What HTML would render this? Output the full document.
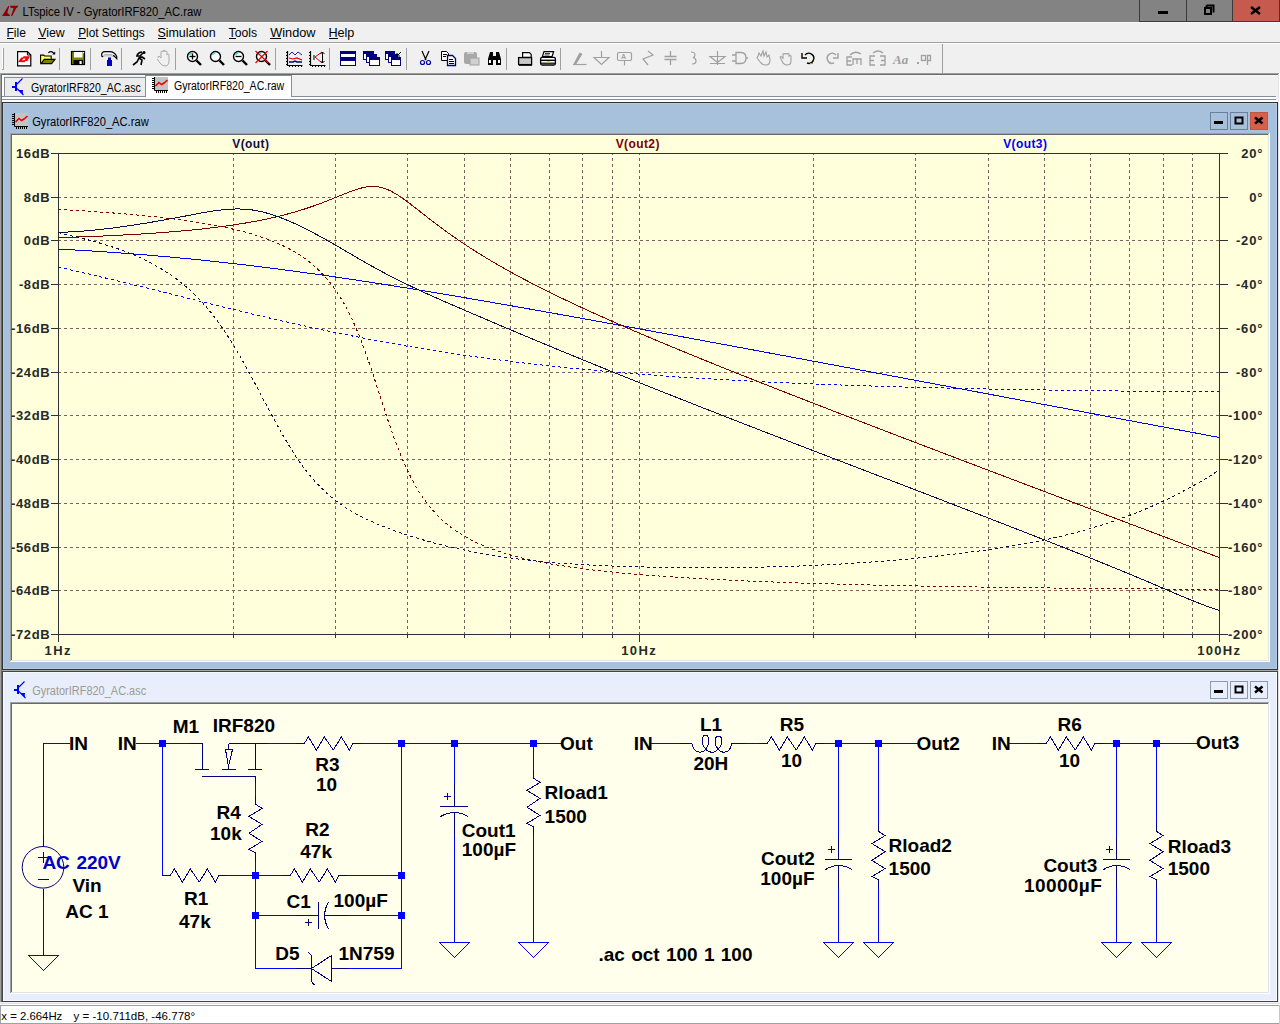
<!DOCTYPE html>
<html><head><meta charset="utf-8"><style>
html,body{margin:0;padding:0;width:1280px;height:1024px;overflow:hidden;background:#f0f0f0}
svg{display:block;font-family:"Liberation Sans",sans-serif}
</style></head><body>
<svg width="1280" height="1024" viewBox="0 0 1280 1024"><rect x="0" y="0" width="1280" height="1024" fill="#f0f0f0"/><rect x="0" y="0" width="1280" height="22" fill="#838383"/><path d="M8.4 5.8 L9.2 6.6 L7.2 12.8 L9.9 15 L9.9 16.1 L2 16.1 L3.2 14.3 Z M10.2 5.8 L18.3 5.8 L17.6 7.2 L16.2 8.2 L12.2 16.1 L11 16.1 L13.6 8.3 L10.3 7.4 Z" fill="#8e0000"/><text x="22.599999999999998" y="16" font-size="12" fill="#000" font-weight="normal" textLength="178.8" lengthAdjust="spacingAndGlyphs">LTspice IV - GyratorIRF820_AC.raw</text><rect x="1139" y="0" width="141" height="22" fill="#838383"/><rect x="1233" y="0" width="47" height="21" fill="#c75a4e"/><rect x="1139" y="0" width="1" height="22" fill="#3a3a3a"/><rect x="1186" y="0" width="1" height="22" fill="#3a3a3a"/><rect x="1232" y="0" width="1" height="22" fill="#3a3a3a"/><rect x="1279" y="0" width="1" height="22" fill="#3a3a3a"/><rect x="1139" y="21" width="141" height="1" fill="#3a3a3a"/><rect x="1158" y="11" width="10" height="3" fill="#000"/><path d="M1206.5 5.5 h7 v7 M1206.5 7.5 v-2" stroke="#000" stroke-width="2" fill="none"/><rect x="1205" y="8" width="6" height="6" fill="none" stroke="#000" stroke-width="2"/><path d="M1251 7 L1260 14 M1260 7 L1251 14" stroke="#000" stroke-width="2.4"/><rect x="0" y="22" width="1280" height="1" fill="#f8f8f8"/><text x="6.4" y="37" font-size="12" fill="#000" font-weight="normal" textLength="19.5" lengthAdjust="spacingAndGlyphs">File</text><text x="38.199999999999996" y="37" font-size="12" fill="#000" font-weight="normal" textLength="26.499999999999996" lengthAdjust="spacingAndGlyphs">View</text><text x="78.15" y="37" font-size="12" fill="#000" font-weight="normal" textLength="66.55" lengthAdjust="spacingAndGlyphs">Plot Settings</text><text x="157.4" y="37" font-size="12" fill="#000" font-weight="normal" textLength="58.2" lengthAdjust="spacingAndGlyphs">Simulation</text><text x="228.6" y="37" font-size="12" fill="#000" font-weight="normal" textLength="28.50000000000001" lengthAdjust="spacingAndGlyphs">Tools</text><text x="270.2" y="37" font-size="12" fill="#000" font-weight="normal" textLength="45.39999999999999" lengthAdjust="spacingAndGlyphs">Window</text><text x="328.4" y="37" font-size="12" fill="#000" font-weight="normal" textLength="26.00000000000001" lengthAdjust="spacingAndGlyphs">Help</text><rect x="7" y="38" width="7" height="1" fill="#000"/><rect x="38" y="38" width="8" height="1" fill="#000"/><rect x="78" y="38" width="8" height="1" fill="#000"/><rect x="158" y="38" width="8" height="1" fill="#000"/><rect x="229" y="38" width="7" height="1" fill="#000"/><rect x="270" y="38" width="11" height="1" fill="#000"/><rect x="329" y="38" width="9" height="1" fill="#000"/><rect x="0" y="42" width="1280" height="1" fill="#a0a0a0"/><rect x="0" y="43" width="1280" height="1" fill="#ffffff"/><rect x="0" y="44" width="1280" height="29" fill="#f0f0f0"/><rect x="0" y="73" width="1280" height="1" fill="#a0a0a0"/><rect x="0" y="74" width="1280" height="1" fill="#ffffff"/><rect x="2" y="48" width="1" height="22" fill="#ffffff"/><rect x="3" y="48" width="1" height="22" fill="#a0a0a0"/><rect x="2" y="69" width="2" height="1" fill="#a0a0a0"/><rect x="942" y="44" width="1" height="29" fill="#a0a0a0"/><rect x="59" y="48" width="1" height="22" fill="#a0a0a0"/><rect x="90" y="48" width="1" height="22" fill="#a0a0a0"/><rect x="121" y="48" width="1" height="22" fill="#a0a0a0"/><rect x="175" y="48" width="1" height="22" fill="#a0a0a0"/><rect x="275" y="48" width="1" height="22" fill="#a0a0a0"/><rect x="329" y="48" width="1" height="22" fill="#a0a0a0"/><rect x="406" y="48" width="1" height="22" fill="#a0a0a0"/><rect x="506" y="48" width="1" height="22" fill="#a0a0a0"/><rect x="560" y="48" width="1" height="22" fill="#a0a0a0"/><path d="M17.6 51.6 h9.8 l3.4 3.4 v10.8 h-13.2 z" fill="#fff" stroke="#000" stroke-width="1.2"/><path d="M27.4 51.6 v3.4 h3.4" fill="none" stroke="#000"/><path d="M18 62 L21.2 57.4 L22.8 57.4 L23.6 56.2 L30.2 56.2 L27.2 61 L25.4 61 L24.6 62.2 Z" fill="#ff0000"/><path d="M22 60.2 l1.3-1.7 h2.4 l-1.3 1.7 z" fill="#fff"/><path d="M40.6 63.6 V55.1 h3.2 l0.8 0.9 h6.6 v3.6" fill="#ffff70" stroke="#000" stroke-width="1.1"/><path d="M41 63.6 L44.2 59.4 H55 L51.6 63.6 Z" fill="#808000" stroke="#000" stroke-width="1.1"/><path d="M48.3 52.8 q3-2.6 5.6 0.6" stroke="#000" fill="none" stroke-width="1.1"/><path d="M52.2 54.6 h3 v-3 z" fill="#000"/><rect x="71.5" y="51.5" width="13" height="13" fill="#808000" stroke="#000" stroke-width="1.2"/><rect x="74" y="52" width="8.5" height="5.5" fill="#fff"/><rect x="73.5" y="60" width="9.5" height="5" fill="#000"/><rect x="79.5" y="61" width="2.2" height="3" fill="#fff"/><rect x="83" y="52" width="1.2" height="1.2" fill="#fff"/><path d="M101.6 54.6 q0.2-3 3.2-3 h4.8 q5.2 0 7.2 5.2 v2 l-1-1.2 q-1.6-2.2 -4.2-2.2 h-6.8 q-1.6 0 -2.4 1.4 q-0.8 0 -0.8 -2.2 z" fill="#f0f0f0" stroke="#000" stroke-width="1.1"/><rect x="103" y="55" width="10" height="1.5" fill="#c8c8c8"/><rect x="108" y="57.5" width="3" height="3" fill="#0000c0"/><rect x="107" y="60" width="5" height="6" fill="#0000c8"/><path d="M133 65 l4-3 l2-4 l3 2 l-1 5 M136 56 l4 0 l3 -3 M139 58 l3 -1 l3 2 M137 55 q2-3 5-3" stroke="#000" stroke-width="1.6" fill="none"/><circle cx="144" cy="52.5" r="1.5" fill="#000"/><path d="M157 59 l3 4 q2 3 5 3 q4 0 4-5 v-6 q0-1 -1-1 q-1 0 -1 1 v-3 q0-1 -1-1 q-1 0 -1 1 q0-2 -1-2 q-1 0 -1 2 q0-1 -1-1 q-1 0 -1 1 v6 l-2-2 q-1 0 -1 2" fill="#f0f0f0" stroke="#a8a8a8"/><circle cx="192.5" cy="56.5" r="5" fill="#fff" stroke="#000" stroke-width="1.4"/><path d="M189.5 55 a3 3 0 0 1 3-2" stroke="#40e0e0" stroke-width="1.5" fill="none"/><path d="M196.5 60.5 l4.5 4.5" stroke="#000" stroke-width="2.4"/><path d="M189.5 56.5 h6" stroke="#000" stroke-width="1.3"/><path d="M192.5 53.5 v6" stroke="#000" stroke-width="1.3"/><circle cx="215.5" cy="56.5" r="5" fill="#fff" stroke="#000" stroke-width="1.4"/><path d="M212.5 55 a3 3 0 0 1 3-2" stroke="#40e0e0" stroke-width="1.5" fill="none"/><path d="M219.5 60.5 l4.5 4.5" stroke="#000" stroke-width="2.4"/><circle cx="238.5" cy="56.5" r="5" fill="#fff" stroke="#000" stroke-width="1.4"/><path d="M235.5 55 a3 3 0 0 1 3-2" stroke="#40e0e0" stroke-width="1.5" fill="none"/><path d="M242.5 60.5 l4.5 4.5" stroke="#000" stroke-width="2.4"/><path d="M235.5 56.5 h6" stroke="#000" stroke-width="1.3"/><circle cx="261.5" cy="56.5" r="5" fill="#fff" stroke="#000" stroke-width="1.4"/><path d="M258.5 55 a3 3 0 0 1 3-2" stroke="#40e0e0" stroke-width="1.5" fill="none"/><path d="M265.5 60.5 l4.5 4.5" stroke="#000" stroke-width="2.4"/><path d="M255.5 51 L268.5 63 M267.5 51 L255.5 63" stroke="#f00000" stroke-width="1.2"/><path d="M287.5 51 v14.5 h15" stroke="#000" stroke-width="1.2" fill="none"/><rect x="286" y="52" width="1.5" height="1" fill="#000"/><rect x="289" y="65.5" width="1" height="1.5" fill="#000"/><rect x="286" y="55" width="1.5" height="1" fill="#000"/><rect x="292" y="65.5" width="1" height="1.5" fill="#000"/><rect x="286" y="58" width="1.5" height="1" fill="#000"/><rect x="295" y="65.5" width="1" height="1.5" fill="#000"/><rect x="286" y="61" width="1.5" height="1" fill="#000"/><rect x="298" y="65.5" width="1" height="1.5" fill="#000"/><rect x="286" y="64" width="1.5" height="1" fill="#000"/><rect x="301" y="65.5" width="1" height="1.5" fill="#000"/><path d="M289 55 l3-3 l3 3 l3-3 l4 3" stroke="#2020a0" fill="none"/><path d="M289 58 l4 1 l4-1 l5 2" stroke="#e00000" fill="none" stroke-width="1.2"/><path d="M289 62 h4 l2-1 l2 1 h5" stroke="#000080" fill="none" stroke-width="1.4"/><path d="M310.5 51 v14.5 h15" stroke="#000" stroke-width="1.2" fill="none"/><rect x="309" y="52" width="1.5" height="1" fill="#000"/><rect x="312" y="65.5" width="1" height="1.5" fill="#000"/><rect x="309" y="55" width="1.5" height="1" fill="#000"/><rect x="315" y="65.5" width="1" height="1.5" fill="#000"/><rect x="309" y="58" width="1.5" height="1" fill="#000"/><rect x="318" y="65.5" width="1" height="1.5" fill="#000"/><rect x="309" y="61" width="1.5" height="1" fill="#000"/><rect x="321" y="65.5" width="1" height="1.5" fill="#000"/><rect x="309" y="64" width="1.5" height="1" fill="#000"/><rect x="324" y="65.5" width="1" height="1.5" fill="#000"/><path d="M322 52 l-7 5 l7 6" stroke="#e00000" fill="none"/><path d="M322.5 52 v11 M320.5 54 l2-2 l2 2 M320.5 61 l2 2 l2-2 M314 55 v5" stroke="#000" fill="none"/><rect x="340.5" y="51.5" width="15" height="6" fill="#fff" stroke="#000080"/><rect x="341" y="52" width="14" height="2" fill="#000080"/><rect x="340.5" y="58.5" width="15" height="7" fill="#fff" stroke="#000080"/><rect x="341" y="59" width="14" height="2" fill="#000080"/><rect x="363.5" y="51.5" width="10" height="8" fill="#fff" stroke="#000080"/><rect x="364" y="52" width="9" height="2" fill="#000080"/><rect x="366.5" y="54.5" width="10" height="8" fill="#fff" stroke="#000080"/><rect x="367" y="55" width="9" height="2" fill="#000080"/><rect x="369.5" y="57.5" width="10" height="8" fill="#fff" stroke="#000080"/><rect x="370" y="58" width="9" height="2" fill="#000080"/><rect x="385.5" y="51.5" width="9" height="8" fill="#fff" stroke="#000080"/><rect x="386" y="52" width="8" height="2" fill="#000080"/><rect x="388.5" y="54.5" width="9" height="8" fill="#fff" stroke="#000080"/><rect x="389" y="55" width="8" height="2" fill="#000080"/><rect x="391.5" y="57.5" width="9" height="8" fill="#fff" stroke="#000080"/><rect x="392" y="58" width="8" height="2" fill="#000080"/><path d="M397 56 l4-4 M397 53 v3 h3" stroke="#000" fill="none"/><path d="M422 51 l4 9 M429 51 l-4 9" stroke="#000" stroke-width="1.2"/><circle cx="422.5" cy="62.5" r="2" fill="none" stroke="#0000a0" stroke-width="1.2"/><circle cx="428.5" cy="62.5" r="2" fill="none" stroke="#0000a0" stroke-width="1.2"/><path d="M441.5 51.5 h5 l2 2 v7 h-7 z" fill="#fff" stroke="#000"/><path d="M447.5 55.5 h5 l3 3 v7 h-8 z" fill="#fff" stroke="#000080" stroke-width="1.3"/><rect x="443" y="54" width="4" height="1" fill="#000"/><rect x="443" y="56" width="3" height="1" fill="#000"/><rect x="449" y="59" width="4" height="1" fill="#000"/><rect x="449" y="61" width="5" height="1" fill="#000"/><rect x="449" y="63" width="5" height="1" fill="#000"/><rect x="464" y="52" width="13" height="12" rx="2" fill="#a8a8a8"/><rect x="470" y="58" width="9" height="7" fill="#d0d0d0" stroke="#a0a0a0"/><rect x="467" y="52" width="7" height="2" fill="#d0d0d0"/><path d="M488 65 v-6 l2-7 h3 v13 z M496 65 v-13 h3 l2 7 v6 z M492 56 h5 v4 h-5 z" fill="#000"/><rect x="489" y="60" width="2" height="3" fill="#fff"/><rect x="498" y="60" width="2" height="3" fill="#fff"/><path d="M522.6 52.6 h6.8 l1.8 1.8 v3 h-8.6 z" fill="#fff" stroke="#000" stroke-width="1.2"/><rect x="518.6" y="57.6" width="13" height="7" fill="#c8c8c8" stroke="#000" stroke-width="1.3"/><rect x="519" y="64" width="13" height="1.8" fill="#000"/><path d="M544 51.6 h9.6 l-1.6 5 h-9.6 z" fill="#fff" stroke="#000" stroke-width="1.2"/><path d="M545 53.5 h5 M544.5 55 h5" stroke="#000" stroke-width="0.8"/><rect x="540.6" y="57.4" width="14.8" height="7.6" rx="1.5" fill="#fff" stroke="#000" stroke-width="1.3"/><rect x="541" y="59.6" width="14" height="1.4" fill="#000"/><rect x="541" y="62.6" width="14" height="1.2" fill="#000"/><rect x="547" y="61" width="3" height="1.4" fill="#e8e000"/><path d="M573 64.5 h13.5" stroke="#a0a0a0" stroke-width="1.2"/><path d="M573.5 64 L579.5 52.5 L582.5 54 L576 64.5 Z" fill="#a0a0a0"/><path d="M601.5 51 v6 M594 57.5 h15 l-7.5 7 z" stroke="#a0a0a0" fill="none" stroke-width="1.2"/><rect x="617.5" y="52.5" width="14" height="8" rx="1.5" fill="none" stroke="#a0a0a0" stroke-width="1.2"/><path d="M624.5 60.5 v5" stroke="#a0a0a0" stroke-width="1.2"/><text x="621" y="59" font-size="7" font-weight="bold" fill="#a0a0a0">A</text><path d="M648 51 l5 4 l-10 4 l5 6" stroke="#a0a0a0" fill="none" stroke-width="1.2"/><path d="M670.5 51 v5 M670.5 60 v5 M664.5 56.5 h12 M664.5 59.5 h12" stroke="#a0a0a0" stroke-width="1.3"/><path d="M691 52 q4 0 4 3 q0 2 -2 2.5 q3 0.5 3 3.5 q0 3 -4 3" stroke="#a0a0a0" fill="none" stroke-width="1.2"/><path d="M717.5 51 v14 M710 56.5 h15 l-7.5 6 z M710 63.5 h15" stroke="#a0a0a0" fill="none" stroke-width="1.2"/><path d="M732 55 h4 M732 61 h4 M736 52.5 h5 q5 0 5 5.5 q0 5.5 -5 5.5 h-5 z M746 58 h2" stroke="#a0a0a0" fill="none" stroke-width="1.3"/><path d="M757 58 l4 5 q2 2 5 2 q4 0 4-5 l-1-5 l-2 2 l-1-5 l-2 4 l-1-5 l-2 5 l-2-3 l-1 3 z" fill="none" stroke="#a0a0a0" stroke-width="1.1"/><path d="M780 57 l3 6 q2 2 4 2 q4 0 4-4 v-5 q-1-1 -2 0 v-2 q-1-1 -2 0 q-1-1 -2 0 q-1-1 -2 0 v4 q-2-2 -3-1" fill="none" stroke="#a0a0a0" stroke-width="1.1"/><path d="M805 55 a5 5 0 1 1 2 8" stroke="#000" fill="none" stroke-width="1.4"/><path d="M802 53 v5 h5" stroke="#000" fill="none" stroke-width="1.4"/><path d="M810 63.5 h3" stroke="#c0a000" stroke-width="1.2"/><path d="M836 55 a5 5 0 1 0 -2 8" stroke="#a0a0a0" fill="none" stroke-width="1.4"/><path d="M838 53 v5 h-5" stroke="#a0a0a0" fill="none" stroke-width="1.4"/><path d="M852 65 h-5 v-8 h5 M847 61 h4 M853 65 v-6 h8 v6 M857 59 v5 M850 55 q5-5 11 -1" stroke="#a0a0a0" fill="none" stroke-width="1.3"/><path d="M875 56 h-5 v9 h5 M870 60.5 h4 M880 56 h5 v9 h-5 M881 60.5 h4 M873 53 q5-4 10 0" stroke="#a0a0a0" fill="none" stroke-width="1.3"/><text x="893" y="64" font-size="13" font-style="italic" font-weight="bold" fill="#a0a0a0" font-family="Liberation Serif">Aa</text><rect x="917" y="62" width="2" height="2" fill="#a0a0a0"/><rect x="921.5" y="55.5" width="4" height="5" fill="none" stroke="#a0a0a0" stroke-width="1.3"/><path d="M927.5 65 v-9.5 h3 v5 h-3" stroke="#a0a0a0" fill="none" stroke-width="1.3"/><rect x="0" y="73" width="1280" height="1" fill="#a0a0a0"/><rect x="1" y="74" width="1278" height="1" fill="#696969"/><rect x="0" y="73" width="1" height="932" fill="#a0a0a0"/><rect x="1" y="74" width="1" height="930" fill="#696969"/><rect x="1278" y="74" width="1" height="930" fill="#e3e3e3"/><rect x="1279" y="73" width="1" height="932" fill="#ffffff"/><rect x="2" y="75" width="1276" height="27" fill="#f0f0f0"/><rect x="2" y="75" width="1276" height="1" fill="#f8f8f8"/><rect x="2" y="75" width="1" height="27" fill="#ffffff"/><rect x="3" y="75" width="1" height="27" fill="#ffffff"/><rect x="4" y="77" width="142" height="20" fill="#ececec"/><rect x="4" y="77" width="142" height="1" fill="#888c98"/><rect x="4" y="77" width="1" height="20" fill="#888c98"/><rect x="2" y="96" width="1274" height="1" fill="#888c98"/><rect x="2" y="97" width="1274" height="2" fill="#ffffff"/><rect x="2" y="99" width="1274" height="1" fill="#888c98"/><rect x="2" y="100" width="1276" height="2" fill="#ffffff"/><rect x="146" y="75" width="146" height="24" fill="#ffffff"/><rect x="145" y="75" width="147" height="1" fill="#888c98"/><rect x="145" y="75" width="1" height="22" fill="#888c98"/><rect x="291" y="75" width="1" height="22" fill="#888c98"/><g transform="translate(12,79)" shape-rendering="crispEdges"><rect x="0" y="7" width="3" height="2" fill="#0000ff"/><rect x="3" y="3" width="2" height="9" fill="#0000ff"/><path d="M5 5 L10.5 -0.5 M5 9.5 L11.5 16" stroke="#0000ff" stroke-width="1.1" shape-rendering="geometricPrecision"/><path d="M6.5 11 L10 14.5 L10.5 11.5 Z" fill="#0000ff" stroke="#0000ff" stroke-width="0.8"/></g><text x="31.0" y="92" font-size="12" fill="#000" font-weight="normal" textLength="109.7" lengthAdjust="spacingAndGlyphs">GyratorIRF820_AC.asc</text><g transform="translate(152,77)"><rect x="3" y="0" width="13" height="13" fill="#c4c4c4"/><path d="M2.5 0 v13.5 h13.5" stroke="#000" fill="none"/><rect x="0" y="1" width="2" height="1" fill="#000"/><rect x="0" y="3" width="2" height="1" fill="#000"/><rect x="0" y="5" width="2" height="1" fill="#000"/><rect x="0" y="7" width="2" height="1" fill="#000"/><rect x="0" y="9" width="2" height="1" fill="#000"/><rect x="0" y="11" width="2" height="1" fill="#000"/><rect x="4" y="14" width="1" height="2" fill="#000"/><rect x="6" y="14" width="1" height="2" fill="#000"/><rect x="8" y="14" width="1" height="2" fill="#000"/><rect x="10" y="14" width="1" height="2" fill="#000"/><rect x="12" y="14" width="1" height="2" fill="#000"/><rect x="14" y="14" width="1" height="2" fill="#000"/><path d="M3.5 9 l3.5-3.5 l2.5 2 l2.5-1.5 l3.5-3" stroke="#f00000" stroke-width="1.6" fill="none"/></g><text x="174.0" y="90" font-size="12" fill="#000" font-weight="normal" textLength="110.20000000000003" lengthAdjust="spacingAndGlyphs">GyratorIRF820_AC.raw</text><rect x="2" y="102" width="1276" height="568" fill="#a7c1dd"/><rect x="2" y="102" width="1276" height="1" fill="#333333"/><rect x="2" y="102" width="1" height="568" fill="#333333"/><rect x="1277" y="102" width="1" height="568" fill="#333333"/><rect x="2" y="669" width="1276" height="1" fill="#333333"/><rect x="3" y="103" width="1274" height="1" fill="#b0cce8"/><rect x="3" y="103" width="1" height="566" fill="#b0cce8"/><rect x="3" y="668" width="1274" height="1" fill="#b0cce8"/><rect x="1276" y="103" width="1" height="566" fill="#b0cce8"/><g transform="translate(12,113)"><rect x="3" y="0" width="13" height="13" fill="#c4c4c4"/><path d="M2.5 0 v13.5 h13.5" stroke="#000" fill="none"/><rect x="0" y="1" width="2" height="1" fill="#000"/><rect x="0" y="3" width="2" height="1" fill="#000"/><rect x="0" y="5" width="2" height="1" fill="#000"/><rect x="0" y="7" width="2" height="1" fill="#000"/><rect x="0" y="9" width="2" height="1" fill="#000"/><rect x="0" y="11" width="2" height="1" fill="#000"/><rect x="4" y="14" width="1" height="2" fill="#000"/><rect x="6" y="14" width="1" height="2" fill="#000"/><rect x="8" y="14" width="1" height="2" fill="#000"/><rect x="10" y="14" width="1" height="2" fill="#000"/><rect x="12" y="14" width="1" height="2" fill="#000"/><rect x="14" y="14" width="1" height="2" fill="#000"/><path d="M3.5 9 l3.5-3.5 l2.5 2 l2.5-1.5 l3.5-3" stroke="#f00000" stroke-width="1.6" fill="none"/></g><text x="32.15" y="126" font-size="12" fill="#000" font-weight="normal" textLength="116.55" lengthAdjust="spacingAndGlyphs">GyratorIRF820_AC.raw</text><rect x="1210.5" y="112.5" width="17" height="17" fill="#a7c1dd" stroke="#6a7f9a"/><rect x="1214" y="121" width="9" height="3" fill="#000"/><rect x="1230.5" y="112.5" width="17" height="17" fill="#a7c1dd" stroke="#6a7f9a"/><rect x="1235.5" y="117.5" width="7" height="6" fill="none" stroke="#000" stroke-width="2"/><rect x="1250.5" y="112.5" width="17" height="17" fill="#d8604a" stroke="#c25540"/><path d="M1255 117.5 L1262.5 123.5 M1262.5 117.5 L1255 123.5" stroke="#000" stroke-width="2.6"/><rect x="10" y="133" width="1260" height="1" fill="#a0a0a0"/><rect x="10" y="133" width="1" height="529" fill="#a0a0a0"/><rect x="11" y="134" width="1258" height="1" fill="#696969"/><rect x="11" y="134" width="1" height="527" fill="#696969"/><rect x="11" y="660" width="1258" height="1" fill="#e3e3e3"/><rect x="1268" y="134" width="1" height="527" fill="#e3e3e3"/><rect x="10" y="661" width="1260" height="1" fill="#ffffff"/><rect x="1269" y="133" width="1" height="529" fill="#ffffff"/><rect x="12" y="135" width="1256" height="525" fill="#ffffdc"/><g shape-rendering="crispEdges"><line x1="233.5" y1="154" x2="233.5" y2="634" stroke="#7b5f5f" stroke-dasharray="3 3" stroke-dashoffset="2"/><line x1="335.5" y1="154" x2="335.5" y2="634" stroke="#7b5f5f" stroke-dasharray="3 3" stroke-dashoffset="2"/><line x1="407.5" y1="154" x2="407.5" y2="634" stroke="#7b5f5f" stroke-dasharray="3 3" stroke-dashoffset="2"/><line x1="464.5" y1="154" x2="464.5" y2="634" stroke="#7b5f5f" stroke-dasharray="3 3" stroke-dashoffset="2"/><line x1="510.5" y1="154" x2="510.5" y2="634" stroke="#7b5f5f" stroke-dasharray="3 3" stroke-dashoffset="2"/><line x1="549.5" y1="154" x2="549.5" y2="634" stroke="#7b5f5f" stroke-dasharray="3 3" stroke-dashoffset="2"/><line x1="582.5" y1="154" x2="582.5" y2="634" stroke="#7b5f5f" stroke-dasharray="3 3" stroke-dashoffset="2"/><line x1="612.5" y1="154" x2="612.5" y2="634" stroke="#7b5f5f" stroke-dasharray="3 3" stroke-dashoffset="2"/><line x1="813.5" y1="154" x2="813.5" y2="634" stroke="#7b5f5f" stroke-dasharray="3 3" stroke-dashoffset="2"/><line x1="915.5" y1="154" x2="915.5" y2="634" stroke="#7b5f5f" stroke-dasharray="3 3" stroke-dashoffset="2"/><line x1="988.5" y1="154" x2="988.5" y2="634" stroke="#7b5f5f" stroke-dasharray="3 3" stroke-dashoffset="2"/><line x1="1044.5" y1="154" x2="1044.5" y2="634" stroke="#7b5f5f" stroke-dasharray="3 3" stroke-dashoffset="2"/><line x1="1090.5" y1="154" x2="1090.5" y2="634" stroke="#7b5f5f" stroke-dasharray="3 3" stroke-dashoffset="2"/><line x1="1129.5" y1="154" x2="1129.5" y2="634" stroke="#7b5f5f" stroke-dasharray="3 3" stroke-dashoffset="2"/><line x1="1163.5" y1="154" x2="1163.5" y2="634" stroke="#7b5f5f" stroke-dasharray="3 3" stroke-dashoffset="2"/><line x1="1192.5" y1="154" x2="1192.5" y2="634" stroke="#7b5f5f" stroke-dasharray="3 3" stroke-dashoffset="2"/><line x1="639.5" y1="154" x2="639.5" y2="634" stroke="#7b5f5f" stroke-dasharray="3 3" stroke-dashoffset="2"/><line x1="58" y1="197.5" x2="1219" y2="197.5" stroke="#7b5f5f" stroke-dasharray="3 3"/><line x1="58" y1="240.5" x2="1219" y2="240.5" stroke="#7b5f5f" stroke-dasharray="3 3"/><line x1="58" y1="284.5" x2="1219" y2="284.5" stroke="#7b5f5f" stroke-dasharray="3 3"/><line x1="58" y1="328.5" x2="1219" y2="328.5" stroke="#7b5f5f" stroke-dasharray="3 3"/><line x1="58" y1="372.5" x2="1219" y2="372.5" stroke="#7b5f5f" stroke-dasharray="3 3"/><line x1="58" y1="415.5" x2="1219" y2="415.5" stroke="#7b5f5f" stroke-dasharray="3 3"/><line x1="58" y1="459.5" x2="1219" y2="459.5" stroke="#7b5f5f" stroke-dasharray="3 3"/><line x1="58" y1="503.5" x2="1219" y2="503.5" stroke="#7b5f5f" stroke-dasharray="3 3"/><line x1="58" y1="547.5" x2="1219" y2="547.5" stroke="#7b5f5f" stroke-dasharray="3 3"/><line x1="58" y1="590.5" x2="1219" y2="590.5" stroke="#7b5f5f" stroke-dasharray="3 3"/><rect x="51" y="153" width="1177" height="1" fill="#2e3232"/><rect x="51" y="634" width="1177" height="1" fill="#2e3232"/><rect x="58" y="153" width="1" height="489" fill="#2e3232"/><rect x="1219" y="153" width="1" height="489" fill="#2e3232"/><rect x="51" y="153" width="8" height="1" fill="#2e3232"/><rect x="1219" y="153" width="9" height="1" fill="#2e3232"/><rect x="51" y="197" width="8" height="1" fill="#2e3232"/><rect x="1219" y="197" width="9" height="1" fill="#2e3232"/><rect x="51" y="240" width="8" height="1" fill="#2e3232"/><rect x="1219" y="240" width="9" height="1" fill="#2e3232"/><rect x="51" y="284" width="8" height="1" fill="#2e3232"/><rect x="1219" y="284" width="9" height="1" fill="#2e3232"/><rect x="51" y="328" width="8" height="1" fill="#2e3232"/><rect x="1219" y="328" width="9" height="1" fill="#2e3232"/><rect x="51" y="372" width="8" height="1" fill="#2e3232"/><rect x="1219" y="372" width="9" height="1" fill="#2e3232"/><rect x="51" y="415" width="8" height="1" fill="#2e3232"/><rect x="1219" y="415" width="9" height="1" fill="#2e3232"/><rect x="51" y="459" width="8" height="1" fill="#2e3232"/><rect x="1219" y="459" width="9" height="1" fill="#2e3232"/><rect x="51" y="503" width="8" height="1" fill="#2e3232"/><rect x="1219" y="503" width="9" height="1" fill="#2e3232"/><rect x="51" y="547" width="8" height="1" fill="#2e3232"/><rect x="1219" y="547" width="9" height="1" fill="#2e3232"/><rect x="51" y="590" width="8" height="1" fill="#2e3232"/><rect x="1219" y="590" width="9" height="1" fill="#2e3232"/><rect x="51" y="634" width="8" height="1" fill="#2e3232"/><rect x="1219" y="634" width="9" height="1" fill="#2e3232"/><rect x="233" y="634" width="1" height="4" fill="#2e3232"/><rect x="335" y="634" width="1" height="4" fill="#2e3232"/><rect x="407" y="634" width="1" height="4" fill="#2e3232"/><rect x="464" y="634" width="1" height="4" fill="#2e3232"/><rect x="510" y="634" width="1" height="4" fill="#2e3232"/><rect x="549" y="634" width="1" height="4" fill="#2e3232"/><rect x="582" y="634" width="1" height="4" fill="#2e3232"/><rect x="612" y="634" width="1" height="4" fill="#2e3232"/><rect x="813" y="634" width="1" height="4" fill="#2e3232"/><rect x="915" y="634" width="1" height="4" fill="#2e3232"/><rect x="988" y="634" width="1" height="4" fill="#2e3232"/><rect x="1044" y="634" width="1" height="4" fill="#2e3232"/><rect x="1090" y="634" width="1" height="4" fill="#2e3232"/><rect x="1129" y="634" width="1" height="4" fill="#2e3232"/><rect x="1163" y="634" width="1" height="4" fill="#2e3232"/><rect x="1192" y="634" width="1" height="4" fill="#2e3232"/><rect x="639" y="634" width="1" height="8" fill="#2e3232"/></g><text x="50.2" y="158" font-size="13" fill="#262a2a" font-weight="bold" text-anchor="end" letter-spacing="0.6">16dB</text><text x="50.2" y="202" font-size="13" fill="#262a2a" font-weight="bold" text-anchor="end" letter-spacing="0.6">8dB</text><text x="50.2" y="245" font-size="13" fill="#262a2a" font-weight="bold" text-anchor="end" letter-spacing="0.6">0dB</text><text x="50.2" y="289" font-size="13" fill="#262a2a" font-weight="bold" text-anchor="end" letter-spacing="0.6">-8dB</text><text x="50.2" y="333" font-size="13" fill="#262a2a" font-weight="bold" text-anchor="end" letter-spacing="0.6">-16dB</text><text x="50.2" y="377" font-size="13" fill="#262a2a" font-weight="bold" text-anchor="end" letter-spacing="0.6">-24dB</text><text x="50.2" y="420" font-size="13" fill="#262a2a" font-weight="bold" text-anchor="end" letter-spacing="0.6">-32dB</text><text x="50.2" y="464" font-size="13" fill="#262a2a" font-weight="bold" text-anchor="end" letter-spacing="0.6">-40dB</text><text x="50.2" y="508" font-size="13" fill="#262a2a" font-weight="bold" text-anchor="end" letter-spacing="0.6">-48dB</text><text x="50.2" y="552" font-size="13" fill="#262a2a" font-weight="bold" text-anchor="end" letter-spacing="0.6">-56dB</text><text x="50.2" y="595" font-size="13" fill="#262a2a" font-weight="bold" text-anchor="end" letter-spacing="0.6">-64dB</text><text x="50.2" y="639" font-size="13" fill="#262a2a" font-weight="bold" text-anchor="end" letter-spacing="0.6">-72dB</text><text x="1263.2" y="158" font-size="13" fill="#262a2a" font-weight="bold" text-anchor="end" letter-spacing="0.8">20°</text><text x="1263.2" y="202" font-size="13" fill="#262a2a" font-weight="bold" text-anchor="end" letter-spacing="0.8">0°</text><text x="1263.2" y="245" font-size="13" fill="#262a2a" font-weight="bold" text-anchor="end" letter-spacing="0.8">-20°</text><text x="1263.2" y="289" font-size="13" fill="#262a2a" font-weight="bold" text-anchor="end" letter-spacing="0.8">-40°</text><text x="1263.2" y="333" font-size="13" fill="#262a2a" font-weight="bold" text-anchor="end" letter-spacing="0.8">-60°</text><text x="1263.2" y="377" font-size="13" fill="#262a2a" font-weight="bold" text-anchor="end" letter-spacing="0.8">-80°</text><text x="1263.2" y="420" font-size="13" fill="#262a2a" font-weight="bold" text-anchor="end" letter-spacing="0.8">-100°</text><text x="1263.2" y="464" font-size="13" fill="#262a2a" font-weight="bold" text-anchor="end" letter-spacing="0.8">-120°</text><text x="1263.2" y="508" font-size="13" fill="#262a2a" font-weight="bold" text-anchor="end" letter-spacing="0.8">-140°</text><text x="1263.2" y="552" font-size="13" fill="#262a2a" font-weight="bold" text-anchor="end" letter-spacing="0.8">-160°</text><text x="1263.2" y="595" font-size="13" fill="#262a2a" font-weight="bold" text-anchor="end" letter-spacing="0.8">-180°</text><text x="1263.2" y="639" font-size="13" fill="#262a2a" font-weight="bold" text-anchor="end" letter-spacing="0.8">-200°</text><text x="58.2" y="655" font-size="13" fill="#262a2a" font-weight="bold" text-anchor="middle" letter-spacing="1.4">1Hz</text><text x="639.2" y="655" font-size="13" fill="#262a2a" font-weight="bold" text-anchor="middle" letter-spacing="1.4">10Hz</text><text x="1219.2" y="655" font-size="13" fill="#262a2a" font-weight="bold" text-anchor="middle" letter-spacing="1.3">100Hz</text><text x="250.8" y="148" font-size="12" fill="#0e0e48" font-weight="bold" text-anchor="middle" letter-spacing="0.4">V(out)</text><text x="637.8" y="148" font-size="12" fill="#7a0000" font-weight="bold" text-anchor="middle" letter-spacing="0.4">V(out2)</text><text x="1025.3" y="148" font-size="12" fill="#0000f0" font-weight="bold" text-anchor="middle" letter-spacing="0.4">V(out3)</text><polyline points="58.50,267.13 60.16,267.50 61.82,267.87 63.48,268.24 65.14,268.62 66.80,268.99 68.47,269.37 70.13,269.75 71.79,270.13 73.45,270.51 75.11,270.89 76.77,271.27 78.43,271.65 80.09,272.03 81.75,272.42 83.41,272.80 85.08,273.19 86.74,273.58 88.40,273.96 90.06,274.35 91.72,274.74 93.38,275.13 95.04,275.52 96.70,275.91 98.36,276.31 100.02,276.70 101.68,277.10 103.35,277.49 105.01,277.89 106.67,278.28 108.33,278.68 109.99,279.08 111.65,279.48 113.31,279.88 114.97,280.28 116.63,280.68 118.29,281.08 119.95,281.48 121.62,281.88 123.28,282.29 124.94,282.69 126.60,283.09 128.26,283.50 129.92,283.90 131.58,284.31 133.24,284.72 134.90,285.12 136.56,285.53 138.23,285.94 139.89,286.34 141.55,286.75 143.21,287.16 144.87,287.57 146.53,287.98 148.19,288.39 149.85,288.80 151.51,289.21 153.17,289.62 154.83,290.03 156.50,290.44 158.16,290.85 159.82,291.27 161.48,291.68 163.14,292.09 164.80,292.50 166.46,292.91 168.12,293.33 169.78,293.74 171.44,294.15 173.11,294.56 174.77,294.98 176.43,295.39 178.09,295.80 179.75,296.21 181.41,296.63 183.07,297.04 184.73,297.45 186.39,297.86 188.05,298.28 189.71,298.69 191.38,299.10 193.04,299.51 194.70,299.92 196.36,300.34 198.02,300.75 199.68,301.16 201.34,301.57 203.00,301.98 204.66,302.39 206.32,302.80 207.98,303.21 209.65,303.62 211.31,304.03 212.97,304.44 214.63,304.85 216.29,305.25 217.95,305.66 219.61,306.07 221.27,306.48 222.93,306.88 224.59,307.29 226.26,307.69 227.92,308.10 229.58,308.50 231.24,308.91 232.90,309.31 234.56,309.71 236.22,310.11 237.88,310.51 239.54,310.92 241.20,311.32 242.86,311.71 244.53,312.11 246.19,312.51 247.85,312.91 249.51,313.31 251.17,313.70 252.83,314.10 254.49,314.49 256.15,314.88 257.81,315.28 259.47,315.67 261.14,316.06 262.80,316.45 264.46,316.84 266.12,317.23 267.78,317.62 269.44,318.00 271.10,318.39 272.76,318.78 274.42,319.16 276.08,319.54 277.74,319.93 279.41,320.31 281.07,320.69 282.73,321.07 284.39,321.45 286.05,321.82 287.71,322.20 289.37,322.58 291.03,322.95 292.69,323.32 294.35,323.70 296.02,324.07 297.68,324.44 299.34,324.81 301.00,325.17 302.66,325.54 304.32,325.91 305.98,326.27 307.64,326.64 309.30,327.00 310.96,327.36 312.62,327.72 314.29,328.08 315.95,328.44 317.61,328.79 319.27,329.15 320.93,329.50 322.59,329.86 324.25,330.21 325.91,330.56 327.57,330.91 329.23,331.26 330.89,331.60 332.56,331.95 334.22,332.29 335.88,332.64 337.54,332.98 339.20,333.32 340.86,333.66 342.52,334.00 344.18,334.33 345.84,334.67 347.50,335.00 349.17,335.34 350.83,335.67 352.49,336.00 354.15,336.33 355.81,336.66 357.47,336.98 359.13,337.31 360.79,337.63 362.45,337.96 364.11,338.28 365.77,338.60 367.44,338.91 369.10,339.23 370.76,339.55 372.42,339.86 374.08,340.18 375.74,340.49 377.40,340.80 379.06,341.11 380.72,341.42 382.38,341.72 384.05,342.03 385.71,342.33 387.37,342.63 389.03,342.93 390.69,343.23 392.35,343.53 394.01,343.83 395.67,344.12 397.33,344.42 398.99,344.71 400.65,345.00 402.32,345.29 403.98,345.58 405.64,345.87 407.30,346.16 408.96,346.44 410.62,346.72 412.28,347.01 413.94,347.29 415.60,347.57 417.26,347.84 418.92,348.12 420.59,348.40 422.25,348.67 423.91,348.94 425.57,349.21 427.23,349.48 428.89,349.75 430.55,350.02 432.21,350.29 433.87,350.55 435.53,350.81 437.20,351.07 438.86,351.34 440.52,351.59 442.18,351.85 443.84,352.11 445.50,352.36 447.16,352.62 448.82,352.87 450.48,353.12 452.14,353.37 453.80,353.62 455.47,353.87 457.13,354.11 458.79,354.36 460.45,354.60 462.11,354.84 463.77,355.09 465.43,355.32 467.09,355.56 468.75,355.80 470.41,356.04 472.08,356.27 473.74,356.50 475.40,356.74 477.06,356.97 478.72,357.20 480.38,357.42 482.04,357.65 483.70,357.88 485.36,358.10 487.02,358.32 488.68,358.55 490.35,358.77 492.01,358.99 493.67,359.20 495.33,359.42 496.99,359.64 498.65,359.85 500.31,360.06 501.97,360.28 503.63,360.49 505.29,360.70 506.95,360.91 508.62,361.11 510.28,361.32 511.94,361.52 513.60,361.73 515.26,361.93 516.92,362.13 518.58,362.33 520.24,362.53 521.90,362.73 523.56,362.93 525.23,363.12 526.89,363.32 528.55,363.51 530.21,363.70 531.87,363.90 533.53,364.09 535.19,364.28 536.85,364.46 538.51,364.65 540.17,364.84 541.83,365.02 543.50,365.20 545.16,365.39 546.82,365.57 548.48,365.75 550.14,365.93 551.80,366.11 553.46,366.28 555.12,366.46 556.78,366.63 558.44,366.81 560.11,366.98 561.77,367.15 563.43,367.33 565.09,367.50 566.75,367.66 568.41,367.83 570.07,368.00 571.73,368.16 573.39,368.33 575.05,368.49 576.71,368.66 578.38,368.82 580.04,368.98 581.70,369.14 583.36,369.30 585.02,369.46 586.68,369.61 588.34,369.77 590.00,369.93 591.66,370.08 593.32,370.23 594.98,370.39 596.65,370.54 598.31,370.69 599.97,370.84 601.63,370.99 603.29,371.13 604.95,371.28 606.61,371.43 608.27,371.57 609.93,371.72 611.59,371.86 613.26,372.00 614.92,372.14 616.58,372.28 618.24,372.42 619.90,372.56 621.56,372.70 623.22,372.84 624.88,372.97 626.54,373.11 628.20,373.24 629.86,373.38 631.53,373.51 633.19,373.64 634.85,373.77 636.51,373.90 638.17,374.03 639.83,374.16 641.49,374.29 643.15,374.42 644.81,374.55 646.47,374.67 648.14,374.80 649.80,374.92 651.46,375.04 653.12,375.17 654.78,375.29 656.44,375.41 658.10,375.53 659.76,375.65 661.42,375.77 663.08,375.89 664.74,376.00 666.41,376.12 668.07,376.24 669.73,376.35 671.39,376.46 673.05,376.58 674.71,376.69 676.37,376.80 678.03,376.92 679.69,377.03 681.35,377.14 683.02,377.25 684.68,377.35 686.34,377.46 688.00,377.57 689.66,377.68 691.32,377.78 692.98,377.89 694.64,377.99 696.30,378.10 697.96,378.20 699.62,378.30 701.29,378.40 702.95,378.51 704.61,378.61 706.27,378.71 707.93,378.81 709.59,378.90 711.25,379.00 712.91,379.10 714.57,379.20 716.23,379.29 717.89,379.39 719.56,379.48 721.22,379.58 722.88,379.67 724.54,379.77 726.20,379.86 727.86,379.95 729.52,380.04 731.18,380.13 732.84,380.22 734.50,380.31 736.17,380.40 737.83,380.49 739.49,380.58 741.15,380.67 742.81,380.75 744.47,380.84 746.13,380.93 747.79,381.01 749.45,381.10 751.11,381.18 752.77,381.26 754.44,381.35 756.10,381.43 757.76,381.51 759.42,381.59 761.08,381.67 762.74,381.75 764.40,381.83 766.06,381.91 767.72,381.99 769.38,382.07 771.05,382.15 772.71,382.23 774.37,382.30 776.03,382.38 777.69,382.45 779.35,382.53 781.01,382.60 782.67,382.68 784.33,382.75 785.99,382.83 787.65,382.90 789.32,382.97 790.98,383.04 792.64,383.12 794.30,383.19 795.96,383.26 797.62,383.33 799.28,383.40 800.94,383.47 802.60,383.54 804.26,383.60 805.92,383.67 807.59,383.74 809.25,383.81 810.91,383.87 812.57,383.94 814.23,384.01 815.89,384.07 817.55,384.14 819.21,384.20 820.87,384.26 822.53,384.33 824.20,384.39 825.86,384.45 827.52,384.52 829.18,384.58 830.84,384.64 832.50,384.70 834.16,384.76 835.82,384.82 837.48,384.88 839.14,384.94 840.80,385.00 842.47,385.06 844.13,385.12 845.79,385.18 847.45,385.23 849.11,385.29 850.77,385.35 852.43,385.41 854.09,385.46 855.75,385.52 857.41,385.57 859.08,385.63 860.74,385.68 862.40,385.74 864.06,385.79 865.72,385.85 867.38,385.90 869.04,385.95 870.70,386.00 872.36,386.06 874.02,386.11 875.68,386.16 877.35,386.21 879.01,386.26 880.67,386.31 882.33,386.36 883.99,386.41 885.65,386.46 887.31,386.51 888.97,386.56 890.63,386.61 892.29,386.66 893.95,386.71 895.62,386.76 897.28,386.80 898.94,386.85 900.60,386.90 902.26,386.94 903.92,386.99 905.58,387.04 907.24,387.08 908.90,387.13 910.56,387.17 912.23,387.22 913.89,387.26 915.55,387.31 917.21,387.35 918.87,387.39 920.53,387.44 922.19,387.48 923.85,387.52 925.51,387.56 927.17,387.61 928.83,387.65 930.50,387.69 932.16,387.73 933.82,387.77 935.48,387.81 937.14,387.85 938.80,387.89 940.46,387.93 942.12,387.97 943.78,388.01 945.44,388.05 947.11,388.09 948.77,388.13 950.43,388.17 952.09,388.21 953.75,388.25 955.41,388.28 957.07,388.32 958.73,388.36 960.39,388.39 962.05,388.43 963.71,388.47 965.38,388.50 967.04,388.54 968.70,388.58 970.36,388.61 972.02,388.65 973.68,388.68 975.34,388.72 977.00,388.75 978.66,388.79 980.32,388.82 981.98,388.85 983.65,388.89 985.31,388.92 986.97,388.95 988.63,388.99 990.29,389.02 991.95,389.05 993.61,389.09 995.27,389.12 996.93,389.15 998.59,389.18 1000.26,389.21 1001.92,389.24 1003.58,389.28 1005.24,389.31 1006.90,389.34 1008.56,389.37 1010.22,389.40 1011.88,389.43 1013.54,389.46 1015.20,389.49 1016.86,389.52 1018.53,389.55 1020.19,389.58 1021.85,389.61 1023.51,389.63 1025.17,389.66 1026.83,389.69 1028.49,389.72 1030.15,389.75 1031.81,389.78 1033.47,389.80 1035.14,389.83 1036.80,389.86 1038.46,389.89 1040.12,389.91 1041.78,389.94 1043.44,389.97 1045.10,389.99 1046.76,390.02 1048.42,390.05 1050.08,390.07 1051.74,390.10 1053.41,390.12 1055.07,390.15 1056.73,390.17 1058.39,390.20 1060.05,390.22 1061.71,390.25 1063.37,390.27 1065.03,390.30 1066.69,390.32 1068.35,390.35 1070.02,390.37 1071.68,390.39 1073.34,390.42 1075.00,390.44 1076.66,390.46 1078.32,390.49 1079.98,390.51 1081.64,390.53 1083.30,390.56 1084.96,390.58 1086.62,390.60 1088.29,390.62 1089.95,390.65 1091.61,390.67 1093.27,390.69 1094.93,390.71 1096.59,390.73 1098.25,390.75 1099.91,390.78 1101.57,390.80 1103.23,390.82 1104.89,390.84 1106.56,390.86 1108.22,390.88 1109.88,390.90 1111.54,390.92 1113.20,390.94 1114.86,390.96 1116.52,390.98 1118.18,391.00 1119.84,391.02 1121.50,391.04 1123.17,391.06 1124.83,391.08 1126.49,391.10 1128.15,391.12 1129.81,391.14 1131.47,391.15 1133.13,391.17 1134.79,391.19 1136.45,391.21 1138.11,391.23 1139.77,391.25 1141.44,391.26 1143.10,391.28 1144.76,391.30 1146.42,391.32 1148.08,391.34 1149.74,391.35 1151.40,391.37 1153.06,391.39 1154.72,391.41 1156.38,391.42 1158.05,391.44 1159.71,391.46 1161.37,391.47 1163.03,391.49 1164.69,391.51 1166.35,391.52 1168.01,391.54 1169.67,391.55 1171.33,391.57 1172.99,391.59 1174.65,391.60 1176.32,391.62 1177.98,391.63 1179.64,391.65 1181.30,391.66 1182.96,391.68 1184.62,391.70 1186.28,391.71 1187.94,391.73 1189.60,391.74 1191.26,391.76 1192.92,391.77 1194.59,391.78 1196.25,391.80 1197.91,391.81 1199.57,391.83 1201.23,391.84 1202.89,391.86 1204.55,391.87 1206.21,391.88 1207.87,391.90 1209.53,391.91 1211.20,391.93 1212.86,391.94 1214.52,391.95 1216.18,391.97 1217.84,391.98 1219.50,391.99" fill="none" stroke="#0000f0" stroke-width="1" stroke-dasharray="3 3" shape-rendering="crispEdges"/><polyline points="58.50,209.35 60.16,209.44 61.82,209.54 63.48,209.63 65.14,209.73 66.80,209.83 68.47,209.92 70.13,210.02 71.79,210.12 73.45,210.22 75.11,210.33 76.77,210.43 78.43,210.53 80.09,210.64 81.75,210.74 83.41,210.85 85.08,210.96 86.74,211.07 88.40,211.18 90.06,211.29 91.72,211.41 93.38,211.52 95.04,211.64 96.70,211.75 98.36,211.87 100.02,211.99 101.68,212.11 103.35,212.23 105.01,212.35 106.67,212.48 108.33,212.61 109.99,212.73 111.65,212.86 113.31,212.99 114.97,213.12 116.63,213.26 118.29,213.39 119.95,213.53 121.62,213.67 123.28,213.81 124.94,213.95 126.60,214.09 128.26,214.24 129.92,214.38 131.58,214.53 133.24,214.68 134.90,214.83 136.56,214.99 138.23,215.14 139.89,215.30 141.55,215.46 143.21,215.62 144.87,215.79 146.53,215.95 148.19,216.12 149.85,216.29 151.51,216.46 153.17,216.64 154.83,216.81 156.50,216.99 158.16,217.18 159.82,217.36 161.48,217.55 163.14,217.74 164.80,217.93 166.46,218.12 168.12,218.32 169.78,218.52 171.44,218.73 173.11,218.93 174.77,219.14 176.43,219.35 178.09,219.57 179.75,219.79 181.41,220.01 183.07,220.24 184.73,220.47 186.39,220.70 188.05,220.94 189.71,221.18 191.38,221.42 193.04,221.67 194.70,221.92 196.36,222.17 198.02,222.43 199.68,222.70 201.34,222.97 203.00,223.24 204.66,223.52 206.32,223.80 207.98,224.09 209.65,224.38 211.31,224.68 212.97,224.98 214.63,225.29 216.29,225.61 217.95,225.93 219.61,226.25 221.27,226.58 222.93,226.92 224.59,227.27 226.26,227.62 227.92,227.98 229.58,228.34 231.24,228.72 232.90,229.10 234.56,229.48 236.22,229.88 237.88,230.28 239.54,230.70 241.20,231.12 242.86,231.55 244.53,231.99 246.19,232.44 247.85,232.90 249.51,233.37 251.17,233.85 252.83,234.34 254.49,234.84 256.15,235.36 257.81,235.88 259.47,236.42 261.14,236.98 262.80,237.54 264.46,238.12 266.12,238.72 267.78,239.33 269.44,239.95 271.10,240.59 272.76,241.25 274.42,241.93 276.08,242.63 277.74,243.34 279.41,244.08 281.07,244.83 282.73,245.61 284.39,246.41 286.05,247.23 287.71,248.08 289.37,248.95 291.03,249.85 292.69,250.77 294.35,251.73 296.02,252.71 297.68,253.73 299.34,254.78 301.00,255.87 302.66,256.99 304.32,258.15 305.98,259.35 307.64,260.59 309.30,261.87 310.96,263.21 312.62,264.58 314.29,266.01 315.95,267.49 317.61,269.03 319.27,270.63 320.93,272.28 322.59,274.00 324.25,275.79 325.91,277.65 327.57,279.58 329.23,281.59 330.89,283.68 332.56,285.86 334.22,288.12 335.88,290.48 337.54,292.94 339.20,295.50 340.86,298.16 342.52,300.94 344.18,303.83 345.84,306.84 347.50,309.98 349.17,313.24 350.83,316.63 352.49,320.15 354.15,323.81 355.81,327.60 357.47,331.53 359.13,335.60 360.79,339.81 362.45,344.14 364.11,348.61 365.77,353.19 367.44,357.89 369.10,362.70 370.76,367.60 372.42,372.58 374.08,377.63 375.74,382.74 377.40,387.88 379.06,393.04 380.72,398.21 382.38,403.36 384.05,408.48 385.71,413.55 387.37,418.56 389.03,423.49 390.69,428.34 392.35,433.08 394.01,437.71 395.67,442.22 397.33,446.60 398.99,450.86 400.65,454.97 402.32,458.96 403.98,462.80 405.64,466.51 407.30,470.08 408.96,473.52 410.62,476.83 412.28,480.01 413.94,483.07 415.60,486.00 417.26,488.82 418.92,491.53 420.59,494.12 422.25,496.62 423.91,499.01 425.57,501.31 427.23,503.52 428.89,505.65 430.55,507.68 432.21,509.64 433.87,511.53 435.53,513.34 437.20,515.09 438.86,516.77 440.52,518.38 442.18,519.94 443.84,521.44 445.50,522.89 447.16,524.29 448.82,525.64 450.48,526.94 452.14,528.20 453.80,529.41 455.47,530.58 457.13,531.72 458.79,532.82 460.45,533.88 462.11,534.91 463.77,535.91 465.43,536.88 467.09,537.81 468.75,538.72 470.41,539.60 472.08,540.46 473.74,541.29 475.40,542.10 477.06,542.88 478.72,543.65 480.38,544.39 482.04,545.11 483.70,545.81 485.36,546.50 487.02,547.16 488.68,547.81 490.35,548.44 492.01,549.06 493.67,549.66 495.33,550.25 496.99,550.82 498.65,551.37 500.31,551.92 501.97,552.45 503.63,552.97 505.29,553.48 506.95,553.97 508.62,554.46 510.28,554.93 511.94,555.39 513.60,555.85 515.26,556.29 516.92,556.72 518.58,557.15 520.24,557.56 521.90,557.97 523.56,558.37 525.23,558.76 526.89,559.14 528.55,559.52 530.21,559.89 531.87,560.25 533.53,560.60 535.19,560.95 536.85,561.29 538.51,561.63 540.17,561.95 541.83,562.28 543.50,562.59 545.16,562.90 546.82,563.21 548.48,563.51 550.14,563.80 551.80,564.09 553.46,564.38 555.12,564.66 556.78,564.93 558.44,565.20 560.11,565.47 561.77,565.73 563.43,565.99 565.09,566.24 566.75,566.49 568.41,566.73 570.07,566.98 571.73,567.21 573.39,567.45 575.05,567.68 576.71,567.90 578.38,568.13 580.04,568.35 581.70,568.57 583.36,568.78 585.02,568.99 586.68,569.20 588.34,569.40 590.00,569.60 591.66,569.80 593.32,570.00 594.98,570.19 596.65,570.38 598.31,570.57 599.97,570.76 601.63,570.94 603.29,571.12 604.95,571.30 606.61,571.47 608.27,571.65 609.93,571.82 611.59,571.99 613.26,572.15 614.92,572.32 616.58,572.48 618.24,572.64 619.90,572.80 621.56,572.96 623.22,573.11 624.88,573.26 626.54,573.41 628.20,573.56 629.86,573.71 631.53,573.86 633.19,574.00 634.85,574.14 636.51,574.28 638.17,574.42 639.83,574.56 641.49,574.69 643.15,574.83 644.81,574.96 646.47,575.09 648.14,575.22 649.80,575.35 651.46,575.47 653.12,575.60 654.78,575.72 656.44,575.85 658.10,575.97 659.76,576.09 661.42,576.20 663.08,576.32 664.74,576.44 666.41,576.55 668.07,576.67 669.73,576.78 671.39,576.89 673.05,577.00 674.71,577.11 676.37,577.22 678.03,577.32 679.69,577.43 681.35,577.53 683.02,577.64 684.68,577.74 686.34,577.84 688.00,577.94 689.66,578.04 691.32,578.14 692.98,578.24 694.64,578.33 696.30,578.43 697.96,578.52 699.62,578.62 701.29,578.71 702.95,578.80 704.61,578.89 706.27,578.98 707.93,579.07 709.59,579.16 711.25,579.25 712.91,579.33 714.57,579.42 716.23,579.50 717.89,579.59 719.56,579.67 721.22,579.76 722.88,579.84 724.54,579.92 726.20,580.00 727.86,580.08 729.52,580.16 731.18,580.24 732.84,580.31 734.50,580.39 736.17,580.47 737.83,580.54 739.49,580.62 741.15,580.69 742.81,580.77 744.47,580.84 746.13,580.91 747.79,580.98 749.45,581.06 751.11,581.13 752.77,581.20 754.44,581.27 756.10,581.33 757.76,581.40 759.42,581.47 761.08,581.54 762.74,581.60 764.40,581.67 766.06,581.74 767.72,581.80 769.38,581.86 771.05,581.93 772.71,581.99 774.37,582.05 776.03,582.12 777.69,582.18 779.35,582.24 781.01,582.30 782.67,582.36 784.33,582.42 785.99,582.48 787.65,582.54 789.32,582.60 790.98,582.65 792.64,582.71 794.30,582.77 795.96,582.82 797.62,582.88 799.28,582.94 800.94,582.99 802.60,583.05 804.26,583.10 805.92,583.15 807.59,583.21 809.25,583.26 810.91,583.31 812.57,583.37 814.23,583.42 815.89,583.47 817.55,583.52 819.21,583.57 820.87,583.62 822.53,583.67 824.20,583.72 825.86,583.77 827.52,583.82 829.18,583.86 830.84,583.91 832.50,583.96 834.16,584.01 835.82,584.05 837.48,584.10 839.14,584.15 840.80,584.19 842.47,584.24 844.13,584.28 845.79,584.33 847.45,584.37 849.11,584.42 850.77,584.46 852.43,584.50 854.09,584.55 855.75,584.59 857.41,584.63 859.08,584.67 860.74,584.71 862.40,584.76 864.06,584.80 865.72,584.84 867.38,584.88 869.04,584.92 870.70,584.96 872.36,585.00 874.02,585.04 875.68,585.08 877.35,585.12 879.01,585.15 880.67,585.19 882.33,585.23 883.99,585.27 885.65,585.31 887.31,585.34 888.97,585.38 890.63,585.42 892.29,585.45 893.95,585.49 895.62,585.53 897.28,585.56 898.94,585.60 900.60,585.63 902.26,585.67 903.92,585.70 905.58,585.73 907.24,585.77 908.90,585.80 910.56,585.84 912.23,585.87 913.89,585.90 915.55,585.94 917.21,585.97 918.87,586.00 920.53,586.03 922.19,586.06 923.85,586.10 925.51,586.13 927.17,586.16 928.83,586.19 930.50,586.22 932.16,586.25 933.82,586.28 935.48,586.31 937.14,586.34 938.80,586.37 940.46,586.40 942.12,586.43 943.78,586.46 945.44,586.49 947.11,586.52 948.77,586.55 950.43,586.57 952.09,586.60 953.75,586.63 955.41,586.66 957.07,586.69 958.73,586.71 960.39,586.74 962.05,586.77 963.71,586.79 965.38,586.82 967.04,586.85 968.70,586.87 970.36,586.90 972.02,586.93 973.68,586.95 975.34,586.98 977.00,587.00 978.66,587.03 980.32,587.05 981.98,587.08 983.65,587.10 985.31,587.13 986.97,587.15 988.63,587.17 990.29,587.20 991.95,587.22 993.61,587.25 995.27,587.27 996.93,587.29 998.59,587.32 1000.26,587.34 1001.92,587.36 1003.58,587.38 1005.24,587.41 1006.90,587.43 1008.56,587.45 1010.22,587.47 1011.88,587.50 1013.54,587.52 1015.20,587.54 1016.86,587.56 1018.53,587.58 1020.19,587.60 1021.85,587.62 1023.51,587.65 1025.17,587.67 1026.83,587.69 1028.49,587.71 1030.15,587.73 1031.81,587.75 1033.47,587.77 1035.14,587.79 1036.80,587.81 1038.46,587.83 1040.12,587.85 1041.78,587.87 1043.44,587.89 1045.10,587.90 1046.76,587.92 1048.42,587.94 1050.08,587.96 1051.74,587.98 1053.41,588.00 1055.07,588.02 1056.73,588.04 1058.39,588.05 1060.05,588.07 1061.71,588.09 1063.37,588.11 1065.03,588.12 1066.69,588.14 1068.35,588.16 1070.02,588.18 1071.68,588.19 1073.34,588.21 1075.00,588.23 1076.66,588.25 1078.32,588.26 1079.98,588.28 1081.64,588.29 1083.30,588.31 1084.96,588.33 1086.62,588.34 1088.29,588.36 1089.95,588.38 1091.61,588.39 1093.27,588.41 1094.93,588.42 1096.59,588.44 1098.25,588.45 1099.91,588.47 1101.57,588.48 1103.23,588.50 1104.89,588.51 1106.56,588.53 1108.22,588.54 1109.88,588.56 1111.54,588.57 1113.20,588.59 1114.86,588.60 1116.52,588.62 1118.18,588.63 1119.84,588.65 1121.50,588.66 1123.17,588.67 1124.83,588.69 1126.49,588.70 1128.15,588.71 1129.81,588.73 1131.47,588.74 1133.13,588.76 1134.79,588.77 1136.45,588.78 1138.11,588.79 1139.77,588.81 1141.44,588.82 1143.10,588.83 1144.76,588.85 1146.42,588.86 1148.08,588.87 1149.74,588.88 1151.40,588.90 1153.06,588.91 1154.72,588.92 1156.38,588.93 1158.05,588.95 1159.71,588.96 1161.37,588.97 1163.03,588.98 1164.69,588.99 1166.35,589.01 1168.01,589.02 1169.67,589.03 1171.33,589.04 1172.99,589.05 1174.65,589.06 1176.32,589.07 1177.98,589.09 1179.64,589.10 1181.30,589.11 1182.96,589.12 1184.62,589.13 1186.28,589.14 1187.94,589.15 1189.60,589.16 1191.26,589.17 1192.92,589.18 1194.59,589.19 1196.25,589.20 1197.91,589.21 1199.57,589.22 1201.23,589.23 1202.89,589.24 1204.55,589.25 1206.21,589.26 1207.87,589.27 1209.53,589.28 1211.20,589.29 1212.86,589.30 1214.52,589.31 1216.18,589.32 1217.84,589.33 1219.50,589.34" fill="none" stroke="#7a0000" stroke-width="1" stroke-dasharray="3 3" shape-rendering="crispEdges"/><polyline points="58.50,232.65 59.50,232.89 60.50,233.13 61.50,233.37 62.50,233.62 63.50,233.86 64.50,234.10 65.50,234.34 66.50,234.58 67.50,234.82 68.50,235.06 69.50,235.30 70.50,235.54 71.50,235.78 72.50,236.03 73.50,236.27 74.50,236.51 75.50,236.76 76.50,237.00 77.50,237.25 78.50,237.49 79.50,237.74 80.50,237.99 81.50,238.24 82.50,238.49 83.50,238.74 84.50,238.99 85.50,239.25 86.50,239.51 87.50,239.77 88.50,240.03 89.50,240.29 90.50,240.55 91.50,240.82 92.50,241.08 93.50,241.35 94.50,241.63 95.50,241.90 96.50,242.18 97.50,242.46 98.50,242.74 99.50,243.02 100.50,243.31 101.50,243.60 102.50,243.89 103.50,244.19 104.50,244.49 105.50,244.79 106.50,245.09 107.50,245.40 108.50,245.71 109.50,246.03 110.50,246.35 111.50,246.67 112.50,246.99 113.50,247.32 114.50,247.66 115.50,247.99 116.50,248.33 117.50,248.68 118.50,249.03 119.50,249.38 120.50,249.74 121.50,250.10 122.50,250.47 123.50,250.84 124.50,251.21 125.50,251.59 126.50,251.98 127.50,252.37 128.50,252.76 129.50,253.16 130.50,253.56 131.50,253.97 132.50,254.39 133.50,254.81 134.50,255.23 135.50,255.67 136.50,256.10 137.50,256.54 138.50,256.99 139.50,257.45 140.50,257.91 141.50,258.37 142.50,258.84 143.50,259.32 144.50,259.80 145.50,260.29 146.50,260.79 147.50,261.29 148.50,261.80 149.50,262.32 150.50,262.84 151.50,263.37 152.50,263.90 153.50,264.45 154.50,265.00 155.50,265.55 156.50,266.12 157.50,266.69 158.50,267.27 159.50,267.85 160.50,268.45 161.50,269.05 162.50,269.66 163.50,270.27 164.50,270.90 165.50,271.53 166.50,272.17 167.50,272.82 168.50,273.48 169.50,274.15 170.50,274.83 171.50,275.51 172.50,276.21 173.50,276.92 174.50,277.63 175.50,278.36 176.50,279.10 177.50,279.85 178.50,280.60 179.50,281.38 180.50,282.16 181.50,282.95 182.50,283.76 183.50,284.57 184.50,285.40 185.50,286.25 186.50,287.10 187.50,287.97 188.50,288.85 189.50,289.75 190.50,290.65 191.50,291.58 192.50,292.51 193.50,293.46 194.50,294.43 195.50,295.40 196.50,296.40 197.50,297.41 198.50,298.43 199.50,299.47 200.50,300.52 201.50,301.59 202.50,302.68 203.50,303.78 204.50,304.90 205.50,306.04 206.50,307.19 207.50,308.36 208.50,309.55 209.50,310.75 210.50,311.98 211.50,313.22 212.50,314.48 213.50,315.75 214.50,317.05 215.50,318.36 216.50,319.70 217.50,321.05 218.50,322.42 219.50,323.81 220.50,325.22 221.50,326.66 222.50,328.11 223.50,329.58 224.50,331.07 225.50,332.58 226.50,334.10 227.50,335.65 228.50,337.21 229.50,338.79 230.50,340.38 231.50,342.00 232.50,343.62 233.50,345.27 234.50,346.93 235.50,348.60 236.50,350.29 237.50,351.99 238.50,353.70 239.50,355.43 240.50,357.17 241.50,358.93 242.50,360.69 243.50,362.47 244.50,364.26 245.50,366.05 246.50,367.86 247.50,369.68 248.50,371.51 249.50,373.35 250.50,375.19 251.50,377.04 252.50,378.90 253.50,380.77 254.50,382.64 255.50,384.51 256.50,386.39 257.50,388.27 258.50,390.16 259.50,392.04 260.50,393.93 261.50,395.82 262.50,397.71 263.50,399.60 264.50,401.49 265.50,403.38 266.50,405.26 267.50,407.14 268.50,409.02 269.50,410.89 270.50,412.76 271.50,414.62 272.50,416.48 273.50,418.33 274.50,420.17 275.50,422.00 276.50,423.82 277.50,425.64 278.50,427.44 279.50,429.24 280.50,431.02 281.50,432.79 282.50,434.54 283.50,436.29 284.50,438.02 285.50,439.73 286.50,441.43 287.50,443.11 288.50,444.78 289.50,446.43 290.50,448.06 291.50,449.67 292.50,451.26 293.50,452.84 294.50,454.39 295.50,455.92 296.50,457.43 297.50,458.91 298.50,460.38 299.50,461.82 300.50,463.23 301.50,464.63 302.50,466.00 303.50,467.35 304.50,468.68 305.50,469.98 306.50,471.27 307.50,472.53 308.50,473.78 309.50,475.00 310.50,476.20 311.50,477.39 312.50,478.55 313.50,479.69 314.50,480.82 315.50,481.92 316.50,483.01 317.50,484.08 318.50,485.13 319.50,486.16 320.50,487.17 321.50,488.17 322.50,489.15 323.50,490.11 324.50,491.06 325.50,491.99 326.50,492.90 327.50,493.80 328.50,494.68 329.50,495.55 330.50,496.40 331.50,497.24 332.50,498.06 333.50,498.87 334.50,499.66 335.50,500.44 336.50,501.21 337.50,501.96 338.50,502.70 339.50,503.43 340.50,504.14 341.50,504.85 342.50,505.54 343.50,506.22 344.50,506.88 345.50,507.54 346.50,508.18 347.50,508.82 348.50,509.44 349.50,510.05 350.50,510.66 351.50,511.25 352.50,511.84 353.50,512.41 354.50,512.98 355.50,513.53 356.50,514.08 357.50,514.62 358.50,515.16 359.50,515.68 360.50,516.20 361.50,516.71 362.50,517.21 363.50,517.71 364.50,518.20 365.50,518.69 366.50,519.17 367.50,519.64 368.50,520.11 369.50,520.57 370.50,521.03 371.50,521.48 372.50,521.93 373.50,522.37 374.50,522.81 375.50,523.24 376.50,523.67 377.50,524.10 378.50,524.52 379.50,524.93 380.50,525.35 381.50,525.75 382.50,526.16 383.50,526.56 384.50,526.95 385.50,527.35 386.50,527.73 387.50,528.12 388.50,528.50 389.50,528.88 390.50,529.25 391.50,529.62 392.50,529.99 393.50,530.35 394.50,530.71 395.50,531.07 396.50,531.42 397.50,531.77 398.50,532.12 399.50,532.46 400.50,532.81 401.50,533.14 402.50,533.48 403.50,533.82 404.50,534.15 405.50,534.48 406.50,534.80 407.50,535.13 408.50,535.45 409.50,535.77 410.50,536.09 411.50,536.40 412.50,536.72 413.50,537.03 414.50,537.34 415.50,537.64 416.50,537.95 417.50,538.25 418.50,538.55 419.50,538.85 420.50,539.15 421.50,539.44 422.50,539.73 423.50,540.02 424.50,540.31 425.50,540.59 426.50,540.88 427.50,541.16 428.50,541.44 429.50,541.71 430.50,541.99 431.50,542.26 432.50,542.53 433.50,542.80 434.50,543.07 435.50,543.33 436.50,543.59 437.50,543.86 438.50,544.11 439.50,544.37 440.50,544.63 441.50,544.88 442.50,545.13 443.50,545.38 444.50,545.62 445.50,545.87 446.50,546.11 447.50,546.35 448.50,546.59 449.50,546.83 450.50,547.06 451.50,547.30 452.50,547.53 453.50,547.76 454.50,547.99 455.50,548.21 456.50,548.44 457.50,548.66 458.50,548.88 459.50,549.10 460.50,549.31 461.50,549.53 462.50,549.74 463.50,549.95 464.50,550.16 465.50,550.37 466.50,550.57 467.50,550.78 468.50,550.98 469.50,551.18 470.50,551.38 471.50,551.58 472.50,551.77 473.50,551.97 474.50,552.16 475.50,552.35 476.50,552.54 477.50,552.72 478.50,552.91 479.50,553.09 480.50,553.27 481.50,553.45 482.50,553.63 483.50,553.81 484.50,553.99 485.50,554.16 486.50,554.33 487.50,554.50 488.50,554.67 489.50,554.84 490.50,555.00 491.50,555.17 492.50,555.33 493.50,555.49 494.50,555.65 495.50,555.81 496.50,555.97 497.50,556.12 498.50,556.28 499.50,556.43 500.50,556.58 501.50,556.73 502.50,556.87 503.50,557.02 504.50,557.17 505.50,557.31 506.50,557.45 507.50,557.59 508.50,557.73 509.50,557.87 510.50,558.00 511.50,558.14 512.50,558.27 513.50,558.40 514.50,558.53 515.50,558.66 516.50,558.79 517.50,558.92 518.50,559.04 519.50,559.17 520.50,559.29 521.50,559.41 522.50,559.53 523.50,559.65 524.50,559.77 525.50,559.88 526.50,560.00 527.50,560.11 528.50,560.22 529.50,560.33 530.50,560.44 531.50,560.55 532.50,560.66 533.50,560.77 534.50,560.87 535.50,560.97 536.50,561.08 537.50,561.18 538.50,561.28 539.50,561.38 540.50,561.47 541.50,561.57 542.50,561.67 543.50,561.76 544.50,561.85 545.50,561.95 546.50,562.04 547.50,562.13 548.50,562.22 549.50,562.30 550.50,562.39 551.50,562.48 552.50,562.56 553.50,562.65 554.50,562.73 555.50,562.81 556.50,562.89 557.50,562.97 558.50,563.05 559.50,563.13 560.50,563.20 561.50,563.28 562.50,563.35 563.50,563.43 564.50,563.50 565.50,563.57 566.50,563.64 567.50,563.71 568.50,563.78 569.50,563.85 570.50,563.91 571.50,563.98 572.50,564.05 573.50,564.11 574.50,564.17 575.50,564.24 576.50,564.30 577.50,564.36 578.50,564.42 579.50,564.48 580.50,564.54 581.50,564.59 582.50,564.65 583.50,564.71 584.50,564.76 585.50,564.82 586.50,564.87 587.50,564.92 588.50,564.97 589.50,565.03 590.50,565.08 591.50,565.13 592.50,565.18 593.50,565.22 594.50,565.27 595.50,565.32 596.50,565.37 597.50,565.41 598.50,565.46 599.50,565.50 600.50,565.54 601.50,565.59 602.50,565.63 603.50,565.67 604.50,565.71 605.50,565.75 606.50,565.79 607.50,565.83 608.50,565.87 609.50,565.91 610.50,565.95 611.50,565.98 612.50,566.02 613.50,566.06 614.50,566.09 615.50,566.13 616.50,566.16 617.50,566.19 618.50,566.23 619.50,566.26 620.50,566.29 621.50,566.32 622.50,566.36 623.50,566.39 624.50,566.42 625.50,566.45 626.50,566.48 627.50,566.51 628.50,566.53 629.50,566.56 630.50,566.59 631.50,566.62 632.50,566.65 633.50,566.67 634.50,566.70 635.50,566.72 636.50,566.75 637.50,566.78 638.50,566.80 639.50,566.82 640.50,566.85 641.50,566.87 642.50,566.90 643.50,566.92 644.50,566.94 645.50,566.97 646.50,566.99 647.50,567.01 648.50,567.03 649.50,567.05 650.50,567.07 651.50,567.09 652.50,567.11 653.50,567.13 654.50,567.15 655.50,567.17 656.50,567.19 657.50,567.21 658.50,567.23 659.50,567.25 660.50,567.26 661.50,567.28 662.50,567.30 663.50,567.31 664.50,567.33 665.50,567.35 666.50,567.36 667.50,567.38 668.50,567.39 669.50,567.41 670.50,567.42 671.50,567.43 672.50,567.45 673.50,567.46 674.50,567.47 675.50,567.48 676.50,567.50 677.50,567.51 678.50,567.52 679.50,567.53 680.50,567.54 681.50,567.55 682.50,567.56 683.50,567.57 684.50,567.58 685.50,567.59 686.50,567.60 687.50,567.60 688.50,567.61 689.50,567.62 690.50,567.63 691.50,567.63 692.50,567.64 693.50,567.64 694.50,567.65 695.50,567.65 696.50,567.66 697.50,567.66 698.50,567.67 699.50,567.67 700.50,567.67 701.50,567.68 702.50,567.68 703.50,567.68 704.50,567.68 705.50,567.68 706.50,567.68 707.50,567.68 708.50,567.68 709.50,567.68 710.50,567.68 711.50,567.68 712.50,567.68 713.50,567.68 714.50,567.68 715.50,567.67 716.50,567.67 717.50,567.67 718.50,567.66 719.50,567.66 720.50,567.65 721.50,567.65 722.50,567.64 723.50,567.64 724.50,567.63 725.50,567.63 726.50,567.62 727.50,567.61 728.50,567.60 729.50,567.60 730.50,567.59 731.50,567.58 732.50,567.57 733.50,567.56 734.50,567.55 735.50,567.54 736.50,567.53 737.50,567.52 738.50,567.50 739.50,567.49 740.50,567.48 741.50,567.47 742.50,567.45 743.50,567.44 744.50,567.42 745.50,567.41 746.50,567.39 747.50,567.38 748.50,567.36 749.50,567.35 750.50,567.33 751.50,567.31 752.50,567.30 753.50,567.28 754.50,567.26 755.50,567.24 756.50,567.22 757.50,567.20 758.50,567.18 759.50,567.16 760.50,567.14 761.50,567.12 762.50,567.10 763.50,567.07 764.50,567.05 765.50,567.03 766.50,567.01 767.50,566.98 768.50,566.96 769.50,566.93 770.50,566.91 771.50,566.88 772.50,566.86 773.50,566.83 774.50,566.80 775.50,566.77 776.50,566.75 777.50,566.72 778.50,566.69 779.50,566.66 780.50,566.63 781.50,566.60 782.50,566.57 783.50,566.54 784.50,566.51 785.50,566.48 786.50,566.44 787.50,566.41 788.50,566.38 789.50,566.34 790.50,566.31 791.50,566.28 792.50,566.24 793.50,566.21 794.50,566.17 795.50,566.13 796.50,566.10 797.50,566.06 798.50,566.02 799.50,565.98 800.50,565.95 801.50,565.91 802.50,565.87 803.50,565.83 804.50,565.79 805.50,565.75 806.50,565.70 807.50,565.66 808.50,565.62 809.50,565.58 810.50,565.53 811.50,565.49 812.50,565.45 813.50,565.40 814.50,565.36 815.50,565.31 816.50,565.27 817.50,565.22 818.50,565.17 819.50,565.13 820.50,565.08 821.50,565.03 822.50,564.98 823.50,564.93 824.50,564.88 825.50,564.83 826.50,564.78 827.50,564.73 828.50,564.68 829.50,564.63 830.50,564.57 831.50,564.52 832.50,564.47 833.50,564.41 834.50,564.36 835.50,564.30 836.50,564.25 837.50,564.19 838.50,564.14 839.50,564.08 840.50,564.02 841.50,563.96 842.50,563.90 843.50,563.85 844.50,563.79 845.50,563.73 846.50,563.67 847.50,563.60 848.50,563.54 849.50,563.48 850.50,563.42 851.50,563.36 852.50,563.29 853.50,563.23 854.50,563.17 855.50,563.10 856.50,563.03 857.50,562.97 858.50,562.90 859.50,562.84 860.50,562.77 861.50,562.70 862.50,562.63 863.50,562.56 864.50,562.49 865.50,562.42 866.50,562.35 867.50,562.28 868.50,562.21 869.50,562.14 870.50,562.07 871.50,561.99 872.50,561.92 873.50,561.85 874.50,561.77 875.50,561.70 876.50,561.62 877.50,561.55 878.50,561.47 879.50,561.39 880.50,561.31 881.50,561.24 882.50,561.16 883.50,561.08 884.50,561.00 885.50,560.92 886.50,560.84 887.50,560.76 888.50,560.68 889.50,560.59 890.50,560.51 891.50,560.43 892.50,560.34 893.50,560.26 894.50,560.17 895.50,560.09 896.50,560.00 897.50,559.92 898.50,559.83 899.50,559.74 900.50,559.65 901.50,559.56 902.50,559.47 903.50,559.38 904.50,559.29 905.50,559.20 906.50,559.11 907.50,559.02 908.50,558.93 909.50,558.84 910.50,558.74 911.50,558.65 912.50,558.55 913.50,558.46 914.50,558.36 915.50,558.27 916.50,558.17 917.50,558.07 918.50,557.97 919.50,557.88 920.50,557.78 921.50,557.68 922.50,557.58 923.50,557.48 924.50,557.37 925.50,557.27 926.50,557.17 927.50,557.07 928.50,556.96 929.50,556.86 930.50,556.76 931.50,556.65 932.50,556.54 933.50,556.44 934.50,556.33 935.50,556.22 936.50,556.12 937.50,556.01 938.50,555.90 939.50,555.79 940.50,555.68 941.50,555.57 942.50,555.46 943.50,555.34 944.50,555.23 945.50,555.12 946.50,555.01 947.50,554.89 948.50,554.78 949.50,554.66 950.50,554.55 951.50,554.43 952.50,554.31 953.50,554.19 954.50,554.08 955.50,553.96 956.50,553.84 957.50,553.72 958.50,553.60 959.50,553.48 960.50,553.35 961.50,553.23 962.50,553.11 963.50,552.99 964.50,552.86 965.50,552.74 966.50,552.61 967.50,552.49 968.50,552.36 969.50,552.23 970.50,552.10 971.50,551.97 972.50,551.84 973.50,551.71 974.50,551.58 975.50,551.45 976.50,551.32 977.50,551.19 978.50,551.05 979.50,550.92 980.50,550.78 981.50,550.65 982.50,550.51 983.50,550.37 984.50,550.23 985.50,550.09 986.50,549.95 987.50,549.81 988.50,549.67 989.50,549.52 990.50,549.38 991.50,549.23 992.50,549.09 993.50,548.94 994.50,548.79 995.50,548.64 996.50,548.49 997.50,548.34 998.50,548.19 999.50,548.04 1000.50,547.88 1001.50,547.73 1002.50,547.57 1003.50,547.42 1004.50,547.26 1005.50,547.10 1006.50,546.94 1007.50,546.78 1008.50,546.62 1009.50,546.45 1010.50,546.29 1011.50,546.12 1012.50,545.95 1013.50,545.79 1014.50,545.62 1015.50,545.45 1016.50,545.27 1017.50,545.10 1018.50,544.93 1019.50,544.75 1020.50,544.57 1021.50,544.40 1022.50,544.22 1023.50,544.04 1024.50,543.86 1025.50,543.67 1026.50,543.49 1027.50,543.30 1028.50,543.12 1029.50,542.93 1030.50,542.74 1031.50,542.55 1032.50,542.35 1033.50,542.16 1034.50,541.96 1035.50,541.77 1036.50,541.57 1037.50,541.37 1038.50,541.17 1039.50,540.97 1040.50,540.76 1041.50,540.56 1042.50,540.35 1043.50,540.14 1044.50,539.93 1045.50,539.72 1046.50,539.51 1047.50,539.29 1048.50,539.08 1049.50,538.86 1050.50,538.64 1051.50,538.42 1052.50,538.20 1053.50,537.97 1054.50,537.75 1055.50,537.52 1056.50,537.29 1057.50,537.06 1058.50,536.83 1059.50,536.60 1060.50,536.36 1061.50,536.12 1062.50,535.88 1063.50,535.64 1064.50,535.40 1065.50,535.16 1066.50,534.91 1067.50,534.66 1068.50,534.41 1069.50,534.16 1070.50,533.91 1071.50,533.66 1072.50,533.40 1073.50,533.14 1074.50,532.88 1075.50,532.62 1076.50,532.35 1077.50,532.09 1078.50,531.82 1079.50,531.55 1080.50,531.28 1081.50,531.01 1082.50,530.73 1083.50,530.45 1084.50,530.17 1085.50,529.89 1086.50,529.61 1087.50,529.32 1088.50,529.04 1089.50,528.75 1090.50,528.46 1091.50,528.16 1092.50,527.87 1093.50,527.57 1094.50,527.27 1095.50,526.97 1096.50,526.66 1097.50,526.36 1098.50,526.05 1099.50,525.74 1100.50,525.43 1101.50,525.11 1102.50,524.80 1103.50,524.48 1104.50,524.16 1105.50,523.84 1106.50,523.51 1107.50,523.18 1108.50,522.85 1109.50,522.52 1110.50,522.19 1111.50,521.85 1112.50,521.51 1113.50,521.17 1114.50,520.83 1115.50,520.48 1116.50,520.14 1117.50,519.79 1118.50,519.43 1119.50,519.08 1120.50,518.72 1121.50,518.36 1122.50,518.00 1123.50,517.64 1124.50,517.27 1125.50,516.90 1126.50,516.53 1127.50,516.16 1128.50,515.78 1129.50,515.40 1130.50,515.02 1131.50,514.64 1132.50,514.25 1133.50,513.86 1134.50,513.47 1135.50,513.08 1136.50,512.68 1137.50,512.28 1138.50,511.88 1139.50,511.48 1140.50,511.07 1141.50,510.66 1142.50,510.25 1143.50,509.84 1144.50,509.42 1145.50,509.00 1146.50,508.58 1147.50,508.15 1148.50,507.73 1149.50,507.29 1150.50,506.86 1151.50,506.43 1152.50,505.99 1153.50,505.55 1154.50,505.10 1155.50,504.66 1156.50,504.21 1157.50,503.76 1158.50,503.30 1159.50,502.84 1160.50,502.38 1161.50,501.92 1162.50,501.46 1163.50,500.99 1164.50,500.52 1165.50,500.04 1166.50,499.56 1167.50,499.08 1168.50,498.60 1169.50,498.11 1170.50,497.63 1171.50,497.13 1172.50,496.64 1173.50,496.14 1174.50,495.64 1175.50,495.14 1176.50,494.63 1177.50,494.12 1178.50,493.61 1179.50,493.09 1180.50,492.57 1181.50,492.05 1182.50,491.53 1183.50,491.00 1184.50,490.47 1185.50,489.94 1186.50,489.40 1187.50,488.86 1188.50,488.32 1189.50,487.77 1190.50,487.22 1191.50,486.67 1192.50,486.11 1193.50,485.55 1194.50,484.99 1195.50,484.43 1196.50,483.86 1197.50,483.29 1198.50,482.71 1199.50,482.14 1200.50,481.55 1201.50,480.97 1202.50,480.38 1203.50,479.79 1204.50,479.20 1205.50,478.60 1206.50,478.00 1207.50,477.39 1208.50,476.79 1209.50,476.18 1210.50,475.56 1211.50,474.94 1212.50,474.32 1213.50,473.70 1214.50,473.07 1215.50,472.44 1216.50,471.81 1217.50,471.17 1218.50,470.53 1219.50,469.88" fill="none" stroke="#0e0e48" stroke-width="1" stroke-dasharray="3 3" shape-rendering="crispEdges"/><polyline points="58.50,249.08 60.16,249.17 61.82,249.26 63.48,249.35 65.14,249.44 66.80,249.53 68.47,249.62 70.13,249.71 71.79,249.81 73.45,249.90 75.11,250.00 76.77,250.10 78.43,250.19 80.09,250.29 81.75,250.39 83.41,250.49 85.08,250.59 86.74,250.69 88.40,250.80 90.06,250.90 91.72,251.01 93.38,251.11 95.04,251.22 96.70,251.33 98.36,251.43 100.02,251.54 101.68,251.65 103.35,251.77 105.01,251.88 106.67,251.99 108.33,252.11 109.99,252.22 111.65,252.34 113.31,252.45 114.97,252.57 116.63,252.69 118.29,252.81 119.95,252.93 121.62,253.05 123.28,253.18 124.94,253.30 126.60,253.42 128.26,253.55 129.92,253.68 131.58,253.80 133.24,253.93 134.90,254.06 136.56,254.19 138.23,254.33 139.89,254.46 141.55,254.59 143.21,254.73 144.87,254.86 146.53,255.00 148.19,255.14 149.85,255.28 151.51,255.42 153.17,255.56 154.83,255.70 156.50,255.84 158.16,255.99 159.82,256.13 161.48,256.28 163.14,256.43 164.80,256.57 166.46,256.72 168.12,256.87 169.78,257.02 171.44,257.18 173.11,257.33 174.77,257.48 176.43,257.64 178.09,257.80 179.75,257.95 181.41,258.11 183.07,258.27 184.73,258.43 186.39,258.59 188.05,258.76 189.71,258.92 191.38,259.08 193.04,259.25 194.70,259.42 196.36,259.58 198.02,259.75 199.68,259.92 201.34,260.09 203.00,260.26 204.66,260.44 206.32,260.61 207.98,260.79 209.65,260.96 211.31,261.14 212.97,261.32 214.63,261.49 216.29,261.67 217.95,261.86 219.61,262.04 221.27,262.22 222.93,262.40 224.59,262.59 226.26,262.77 227.92,262.96 229.58,263.15 231.24,263.34 232.90,263.53 234.56,263.72 236.22,263.91 237.88,264.10 239.54,264.30 241.20,264.49 242.86,264.69 244.53,264.88 246.19,265.08 247.85,265.28 249.51,265.48 251.17,265.68 252.83,265.88 254.49,266.08 256.15,266.29 257.81,266.49 259.47,266.70 261.14,266.90 262.80,267.11 264.46,267.32 266.12,267.53 267.78,267.74 269.44,267.95 271.10,268.16 272.76,268.37 274.42,268.58 276.08,268.80 277.74,269.01 279.41,269.23 281.07,269.45 282.73,269.66 284.39,269.88 286.05,270.10 287.71,270.32 289.37,270.54 291.03,270.77 292.69,270.99 294.35,271.21 296.02,271.44 297.68,271.66 299.34,271.89 301.00,272.12 302.66,272.34 304.32,272.57 305.98,272.80 307.64,273.03 309.30,273.26 310.96,273.50 312.62,273.73 314.29,273.96 315.95,274.20 317.61,274.43 319.27,274.67 320.93,274.90 322.59,275.14 324.25,275.38 325.91,275.62 327.57,275.86 329.23,276.10 330.89,276.34 332.56,276.58 334.22,276.82 335.88,277.07 337.54,277.31 339.20,277.55 340.86,277.80 342.52,278.05 344.18,278.29 345.84,278.54 347.50,278.79 349.17,279.04 350.83,279.29 352.49,279.54 354.15,279.79 355.81,280.04 357.47,280.29 359.13,280.54 360.79,280.80 362.45,281.05 364.11,281.31 365.77,281.56 367.44,281.82 369.10,282.07 370.76,282.33 372.42,282.59 374.08,282.85 375.74,283.10 377.40,283.36 379.06,283.62 380.72,283.88 382.38,284.15 384.05,284.41 385.71,284.67 387.37,284.93 389.03,285.20 390.69,285.46 392.35,285.72 394.01,285.99 395.67,286.25 397.33,286.52 398.99,286.79 400.65,287.05 402.32,287.32 403.98,287.59 405.64,287.86 407.30,288.13 408.96,288.40 410.62,288.67 412.28,288.94 413.94,289.21 415.60,289.48 417.26,289.75 418.92,290.02 420.59,290.30 422.25,290.57 423.91,290.84 425.57,291.12 427.23,291.39 428.89,291.67 430.55,291.94 432.21,292.22 433.87,292.50 435.53,292.77 437.20,293.05 438.86,293.33 440.52,293.61 442.18,293.88 443.84,294.16 445.50,294.44 447.16,294.72 448.82,295.00 450.48,295.28 452.14,295.56 453.80,295.85 455.47,296.13 457.13,296.41 458.79,296.69 460.45,296.97 462.11,297.26 463.77,297.54 465.43,297.82 467.09,298.11 468.75,298.39 470.41,298.68 472.08,298.96 473.74,299.25 475.40,299.53 477.06,299.82 478.72,300.11 480.38,300.39 482.04,300.68 483.70,300.97 485.36,301.25 487.02,301.54 488.68,301.83 490.35,302.12 492.01,302.41 493.67,302.70 495.33,302.99 496.99,303.28 498.65,303.57 500.31,303.86 501.97,304.15 503.63,304.44 505.29,304.73 506.95,305.02 508.62,305.31 510.28,305.60 511.94,305.90 513.60,306.19 515.26,306.48 516.92,306.77 518.58,307.07 520.24,307.36 521.90,307.65 523.56,307.95 525.23,308.24 526.89,308.54 528.55,308.83 530.21,309.12 531.87,309.42 533.53,309.71 535.19,310.01 536.85,310.31 538.51,310.60 540.17,310.90 541.83,311.19 543.50,311.49 545.16,311.79 546.82,312.08 548.48,312.38 550.14,312.68 551.80,312.98 553.46,313.27 555.12,313.57 556.78,313.87 558.44,314.17 560.11,314.47 561.77,314.76 563.43,315.06 565.09,315.36 566.75,315.66 568.41,315.96 570.07,316.26 571.73,316.56 573.39,316.86 575.05,317.16 576.71,317.46 578.38,317.76 580.04,318.06 581.70,318.36 583.36,318.66 585.02,318.96 586.68,319.26 588.34,319.56 590.00,319.87 591.66,320.17 593.32,320.47 594.98,320.77 596.65,321.07 598.31,321.37 599.97,321.68 601.63,321.98 603.29,322.28 604.95,322.58 606.61,322.89 608.27,323.19 609.93,323.49 611.59,323.79 613.26,324.10 614.92,324.40 616.58,324.70 618.24,325.01 619.90,325.31 621.56,325.62 623.22,325.92 624.88,326.22 626.54,326.53 628.20,326.83 629.86,327.14 631.53,327.44 633.19,327.75 634.85,328.05 636.51,328.35 638.17,328.66 639.83,328.96 641.49,329.27 643.15,329.57 644.81,329.88 646.47,330.19 648.14,330.49 649.80,330.80 651.46,331.10 653.12,331.41 654.78,331.71 656.44,332.02 658.10,332.33 659.76,332.63 661.42,332.94 663.08,333.24 664.74,333.55 666.41,333.86 668.07,334.16 669.73,334.47 671.39,334.78 673.05,335.08 674.71,335.39 676.37,335.70 678.03,336.00 679.69,336.31 681.35,336.62 683.02,336.92 684.68,337.23 686.34,337.54 688.00,337.85 689.66,338.15 691.32,338.46 692.98,338.77 694.64,339.08 696.30,339.38 697.96,339.69 699.62,340.00 701.29,340.31 702.95,340.62 704.61,340.92 706.27,341.23 707.93,341.54 709.59,341.85 711.25,342.16 712.91,342.47 714.57,342.77 716.23,343.08 717.89,343.39 719.56,343.70 721.22,344.01 722.88,344.32 724.54,344.63 726.20,344.93 727.86,345.24 729.52,345.55 731.18,345.86 732.84,346.17 734.50,346.48 736.17,346.79 737.83,347.10 739.49,347.41 741.15,347.72 742.81,348.03 744.47,348.33 746.13,348.64 747.79,348.95 749.45,349.26 751.11,349.57 752.77,349.88 754.44,350.19 756.10,350.50 757.76,350.81 759.42,351.12 761.08,351.43 762.74,351.74 764.40,352.05 766.06,352.36 767.72,352.67 769.38,352.98 771.05,353.29 772.71,353.60 774.37,353.91 776.03,354.22 777.69,354.53 779.35,354.84 781.01,355.15 782.67,355.46 784.33,355.77 785.99,356.08 787.65,356.39 789.32,356.70 790.98,357.01 792.64,357.32 794.30,357.63 795.96,357.94 797.62,358.25 799.28,358.56 800.94,358.87 802.60,359.19 804.26,359.50 805.92,359.81 807.59,360.12 809.25,360.43 810.91,360.74 812.57,361.05 814.23,361.36 815.89,361.67 817.55,361.98 819.21,362.29 820.87,362.60 822.53,362.91 824.20,363.23 825.86,363.54 827.52,363.85 829.18,364.16 830.84,364.47 832.50,364.78 834.16,365.09 835.82,365.40 837.48,365.71 839.14,366.02 840.80,366.34 842.47,366.65 844.13,366.96 845.79,367.27 847.45,367.58 849.11,367.89 850.77,368.20 852.43,368.51 854.09,368.83 855.75,369.14 857.41,369.45 859.08,369.76 860.74,370.07 862.40,370.38 864.06,370.69 865.72,371.01 867.38,371.32 869.04,371.63 870.70,371.94 872.36,372.25 874.02,372.56 875.68,372.87 877.35,373.19 879.01,373.50 880.67,373.81 882.33,374.12 883.99,374.43 885.65,374.74 887.31,375.06 888.97,375.37 890.63,375.68 892.29,375.99 893.95,376.30 895.62,376.61 897.28,376.93 898.94,377.24 900.60,377.55 902.26,377.86 903.92,378.17 905.58,378.49 907.24,378.80 908.90,379.11 910.56,379.42 912.23,379.73 913.89,380.04 915.55,380.36 917.21,380.67 918.87,380.98 920.53,381.29 922.19,381.60 923.85,381.92 925.51,382.23 927.17,382.54 928.83,382.85 930.50,383.16 932.16,383.48 933.82,383.79 935.48,384.10 937.14,384.41 938.80,384.72 940.46,385.04 942.12,385.35 943.78,385.66 945.44,385.97 947.11,386.28 948.77,386.60 950.43,386.91 952.09,387.22 953.75,387.53 955.41,387.85 957.07,388.16 958.73,388.47 960.39,388.78 962.05,389.09 963.71,389.41 965.38,389.72 967.04,390.03 968.70,390.34 970.36,390.65 972.02,390.97 973.68,391.28 975.34,391.59 977.00,391.90 978.66,392.22 980.32,392.53 981.98,392.84 983.65,393.15 985.31,393.46 986.97,393.78 988.63,394.09 990.29,394.40 991.95,394.71 993.61,395.03 995.27,395.34 996.93,395.65 998.59,395.96 1000.26,396.28 1001.92,396.59 1003.58,396.90 1005.24,397.21 1006.90,397.52 1008.56,397.84 1010.22,398.15 1011.88,398.46 1013.54,398.77 1015.20,399.09 1016.86,399.40 1018.53,399.71 1020.19,400.02 1021.85,400.34 1023.51,400.65 1025.17,400.96 1026.83,401.27 1028.49,401.59 1030.15,401.90 1031.81,402.21 1033.47,402.52 1035.14,402.84 1036.80,403.15 1038.46,403.46 1040.12,403.77 1041.78,404.09 1043.44,404.40 1045.10,404.71 1046.76,405.02 1048.42,405.34 1050.08,405.65 1051.74,405.96 1053.41,406.27 1055.07,406.59 1056.73,406.90 1058.39,407.21 1060.05,407.52 1061.71,407.84 1063.37,408.15 1065.03,408.46 1066.69,408.77 1068.35,409.09 1070.02,409.40 1071.68,409.71 1073.34,410.02 1075.00,410.34 1076.66,410.65 1078.32,410.96 1079.98,411.27 1081.64,411.59 1083.30,411.90 1084.96,412.21 1086.62,412.52 1088.29,412.84 1089.95,413.15 1091.61,413.46 1093.27,413.77 1094.93,414.09 1096.59,414.40 1098.25,414.71 1099.91,415.02 1101.57,415.34 1103.23,415.65 1104.89,415.96 1106.56,416.27 1108.22,416.59 1109.88,416.90 1111.54,417.21 1113.20,417.52 1114.86,417.84 1116.52,418.15 1118.18,418.46 1119.84,418.77 1121.50,419.09 1123.17,419.40 1124.83,419.71 1126.49,420.03 1128.15,420.34 1129.81,420.65 1131.47,420.96 1133.13,421.28 1134.79,421.59 1136.45,421.90 1138.11,422.21 1139.77,422.53 1141.44,422.84 1143.10,423.15 1144.76,423.46 1146.42,423.78 1148.08,424.09 1149.74,424.40 1151.40,424.71 1153.06,425.03 1154.72,425.34 1156.38,425.65 1158.05,425.97 1159.71,426.28 1161.37,426.59 1163.03,426.90 1164.69,427.22 1166.35,427.53 1168.01,427.84 1169.67,428.15 1171.33,428.47 1172.99,428.78 1174.65,429.09 1176.32,429.40 1177.98,429.72 1179.64,430.03 1181.30,430.34 1182.96,430.66 1184.62,430.97 1186.28,431.28 1187.94,431.59 1189.60,431.91 1191.26,432.22 1192.92,432.53 1194.59,432.84 1196.25,433.16 1197.91,433.47 1199.57,433.78 1201.23,434.09 1202.89,434.41 1204.55,434.72 1206.21,435.03 1207.87,435.35 1209.53,435.66 1211.20,435.97 1212.86,436.28 1214.52,436.60 1216.18,436.91 1217.84,437.22 1219.50,437.53" fill="none" stroke="#0000f0" stroke-width="1" shape-rendering="crispEdges"/><polyline points="58.50,237.61 60.16,237.56 61.82,237.51 63.48,237.46 65.14,237.41 66.80,237.36 68.47,237.30 70.13,237.25 71.79,237.19 73.45,237.14 75.11,237.08 76.77,237.02 78.43,236.96 80.09,236.90 81.75,236.84 83.41,236.78 85.08,236.72 86.74,236.66 88.40,236.59 90.06,236.53 91.72,236.46 93.38,236.40 95.04,236.33 96.70,236.26 98.36,236.19 100.02,236.12 101.68,236.05 103.35,235.97 105.01,235.90 106.67,235.83 108.33,235.75 109.99,235.67 111.65,235.59 113.31,235.52 114.97,235.43 116.63,235.35 118.29,235.27 119.95,235.19 121.62,235.10 123.28,235.01 124.94,234.93 126.60,234.84 128.26,234.75 129.92,234.65 131.58,234.56 133.24,234.47 134.90,234.37 136.56,234.27 138.23,234.17 139.89,234.07 141.55,233.97 143.21,233.87 144.87,233.76 146.53,233.66 148.19,233.55 149.85,233.44 151.51,233.33 153.17,233.21 154.83,233.10 156.50,232.98 158.16,232.86 159.82,232.74 161.48,232.62 163.14,232.49 164.80,232.37 166.46,232.24 168.12,232.11 169.78,231.98 171.44,231.84 173.11,231.71 174.77,231.57 176.43,231.43 178.09,231.28 179.75,231.14 181.41,230.99 183.07,230.84 184.73,230.69 186.39,230.53 188.05,230.38 189.71,230.22 191.38,230.06 193.04,229.89 194.70,229.72 196.36,229.55 198.02,229.38 199.68,229.20 201.34,229.03 203.00,228.84 204.66,228.66 206.32,228.47 207.98,228.28 209.65,228.09 211.31,227.89 212.97,227.69 214.63,227.49 216.29,227.28 217.95,227.07 219.61,226.86 221.27,226.64 222.93,226.42 224.59,226.19 226.26,225.96 227.92,225.73 229.58,225.49 231.24,225.25 232.90,225.01 234.56,224.76 236.22,224.51 237.88,224.25 239.54,223.99 241.20,223.72 242.86,223.45 244.53,223.17 246.19,222.89 247.85,222.60 249.51,222.31 251.17,222.02 252.83,221.71 254.49,221.41 256.15,221.09 257.81,220.78 259.47,220.45 261.14,220.12 262.80,219.79 264.46,219.45 266.12,219.10 267.78,218.74 269.44,218.38 271.10,218.01 272.76,217.64 274.42,217.26 276.08,216.87 277.74,216.48 279.41,216.07 281.07,215.66 282.73,215.25 284.39,214.82 286.05,214.39 287.71,213.95 289.37,213.50 291.03,213.04 292.69,212.57 294.35,212.10 296.02,211.62 297.68,211.12 299.34,210.62 301.00,210.11 302.66,209.60 304.32,209.07 305.98,208.53 307.64,207.98 309.30,207.43 310.96,206.86 312.62,206.29 314.29,205.71 315.95,205.11 317.61,204.51 319.27,203.90 320.93,203.28 322.59,202.65 324.25,202.02 325.91,201.37 327.57,200.72 329.23,200.06 330.89,199.40 332.56,198.73 334.22,198.06 335.88,197.38 337.54,196.70 339.20,196.02 340.86,195.35 342.52,194.67 344.18,194.00 345.84,193.34 347.50,192.68 349.17,192.04 350.83,191.41 352.49,190.81 354.15,190.22 355.81,189.66 357.47,189.13 359.13,188.64 360.79,188.18 362.45,187.77 364.11,187.41 365.77,187.10 367.44,186.84 369.10,186.65 370.76,186.53 372.42,186.48 374.08,186.50 375.74,186.60 377.40,186.78 379.06,187.03 380.72,187.37 382.38,187.79 384.05,188.29 385.71,188.86 387.37,189.52 389.03,190.24 390.69,191.03 392.35,191.88 394.01,192.80 395.67,193.77 397.33,194.79 398.99,195.85 400.65,196.96 402.32,198.10 403.98,199.28 405.64,200.48 407.30,201.70 408.96,202.95 410.62,204.21 412.28,205.49 413.94,206.77 415.60,208.07 417.26,209.37 418.92,210.67 420.59,211.97 422.25,213.28 423.91,214.58 425.57,215.88 427.23,217.18 428.89,218.47 430.55,219.75 432.21,221.03 433.87,222.31 435.53,223.57 437.20,224.83 438.86,226.08 440.52,227.32 442.18,228.55 443.84,229.77 445.50,230.98 447.16,232.18 448.82,233.38 450.48,234.56 452.14,235.74 453.80,236.90 455.47,238.06 457.13,239.21 458.79,240.35 460.45,241.48 462.11,242.60 463.77,243.71 465.43,244.81 467.09,245.91 468.75,246.99 470.41,248.07 472.08,249.14 473.74,250.20 475.40,251.26 477.06,252.30 478.72,253.34 480.38,254.37 482.04,255.39 483.70,256.41 485.36,257.42 487.02,258.42 488.68,259.42 490.35,260.41 492.01,261.39 493.67,262.37 495.33,263.34 496.99,264.30 498.65,265.26 500.31,266.21 501.97,267.15 503.63,268.09 505.29,269.03 506.95,269.96 508.62,270.88 510.28,271.80 511.94,272.71 513.60,273.62 515.26,274.53 516.92,275.43 518.58,276.32 520.24,277.21 521.90,278.09 523.56,278.97 525.23,279.85 526.89,280.72 528.55,281.59 530.21,282.45 531.87,283.31 533.53,284.17 535.19,285.02 536.85,285.87 538.51,286.71 540.17,287.56 541.83,288.39 543.50,289.23 545.16,290.06 546.82,290.88 548.48,291.71 550.14,292.53 551.80,293.35 553.46,294.16 555.12,294.97 556.78,295.78 558.44,296.58 560.11,297.39 561.77,298.19 563.43,298.98 565.09,299.78 566.75,300.57 568.41,301.36 570.07,302.14 571.73,302.93 573.39,303.71 575.05,304.49 576.71,305.26 578.38,306.04 580.04,306.81 581.70,307.58 583.36,308.34 585.02,309.11 586.68,309.87 588.34,310.63 590.00,311.39 591.66,312.15 593.32,312.90 594.98,313.65 596.65,314.41 598.31,315.15 599.97,315.90 601.63,316.65 603.29,317.39 604.95,318.13 606.61,318.87 608.27,319.61 609.93,320.34 611.59,321.08 613.26,321.81 614.92,322.54 616.58,323.27 618.24,324.00 619.90,324.73 621.56,325.45 623.22,326.18 624.88,326.90 626.54,327.62 628.20,328.34 629.86,329.06 631.53,329.77 633.19,330.49 634.85,331.20 636.51,331.92 638.17,332.63 639.83,333.34 641.49,334.05 643.15,334.75 644.81,335.46 646.47,336.17 648.14,336.87 649.80,337.57 651.46,338.28 653.12,338.98 654.78,339.68 656.44,340.37 658.10,341.07 659.76,341.77 661.42,342.46 663.08,343.16 664.74,343.85 666.41,344.55 668.07,345.24 669.73,345.93 671.39,346.62 673.05,347.31 674.71,347.99 676.37,348.68 678.03,349.37 679.69,350.05 681.35,350.74 683.02,351.42 684.68,352.10 686.34,352.79 688.00,353.47 689.66,354.15 691.32,354.83 692.98,355.51 694.64,356.18 696.30,356.86 697.96,357.54 699.62,358.22 701.29,358.89 702.95,359.56 704.61,360.24 706.27,360.91 707.93,361.58 709.59,362.26 711.25,362.93 712.91,363.60 714.57,364.27 716.23,364.94 717.89,365.61 719.56,366.27 721.22,366.94 722.88,367.61 724.54,368.28 726.20,368.94 727.86,369.61 729.52,370.27 731.18,370.94 732.84,371.60 734.50,372.26 736.17,372.93 737.83,373.59 739.49,374.25 741.15,374.91 742.81,375.57 744.47,376.23 746.13,376.89 747.79,377.55 749.45,378.21 751.11,378.87 752.77,379.53 754.44,380.18 756.10,380.84 757.76,381.50 759.42,382.15 761.08,382.81 762.74,383.46 764.40,384.12 766.06,384.77 767.72,385.43 769.38,386.08 771.05,386.73 772.71,387.39 774.37,388.04 776.03,388.69 777.69,389.34 779.35,390.00 781.01,390.65 782.67,391.30 784.33,391.95 785.99,392.60 787.65,393.25 789.32,393.90 790.98,394.55 792.64,395.20 794.30,395.84 795.96,396.49 797.62,397.14 799.28,397.79 800.94,398.43 802.60,399.08 804.26,399.73 805.92,400.38 807.59,401.02 809.25,401.67 810.91,402.31 812.57,402.96 814.23,403.60 815.89,404.25 817.55,404.89 819.21,405.54 820.87,406.18 822.53,406.82 824.20,407.47 825.86,408.11 827.52,408.75 829.18,409.40 830.84,410.04 832.50,410.68 834.16,411.32 835.82,411.97 837.48,412.61 839.14,413.25 840.80,413.89 842.47,414.53 844.13,415.17 845.79,415.81 847.45,416.45 849.11,417.09 850.77,417.73 852.43,418.37 854.09,419.01 855.75,419.65 857.41,420.29 859.08,420.93 860.74,421.57 862.40,422.21 864.06,422.85 865.72,423.49 867.38,424.12 869.04,424.76 870.70,425.40 872.36,426.04 874.02,426.68 875.68,427.31 877.35,427.95 879.01,428.59 880.67,429.22 882.33,429.86 883.99,430.50 885.65,431.13 887.31,431.77 888.97,432.41 890.63,433.04 892.29,433.68 893.95,434.31 895.62,434.95 897.28,435.59 898.94,436.22 900.60,436.86 902.26,437.49 903.92,438.13 905.58,438.76 907.24,439.40 908.90,440.03 910.56,440.67 912.23,441.30 913.89,441.93 915.55,442.57 917.21,443.20 918.87,443.84 920.53,444.47 922.19,445.10 923.85,445.74 925.51,446.37 927.17,447.00 928.83,447.64 930.50,448.27 932.16,448.90 933.82,449.54 935.48,450.17 937.14,450.80 938.80,451.44 940.46,452.07 942.12,452.70 943.78,453.33 945.44,453.97 947.11,454.60 948.77,455.23 950.43,455.86 952.09,456.49 953.75,457.13 955.41,457.76 957.07,458.39 958.73,459.02 960.39,459.65 962.05,460.28 963.71,460.92 965.38,461.55 967.04,462.18 968.70,462.81 970.36,463.44 972.02,464.07 973.68,464.70 975.34,465.33 977.00,465.96 978.66,466.59 980.32,467.23 981.98,467.86 983.65,468.49 985.31,469.12 986.97,469.75 988.63,470.38 990.29,471.01 991.95,471.64 993.61,472.27 995.27,472.90 996.93,473.53 998.59,474.16 1000.26,474.79 1001.92,475.42 1003.58,476.05 1005.24,476.68 1006.90,477.31 1008.56,477.94 1010.22,478.57 1011.88,479.20 1013.54,479.83 1015.20,480.46 1016.86,481.09 1018.53,481.71 1020.19,482.34 1021.85,482.97 1023.51,483.60 1025.17,484.23 1026.83,484.86 1028.49,485.49 1030.15,486.12 1031.81,486.75 1033.47,487.38 1035.14,488.01 1036.80,488.63 1038.46,489.26 1040.12,489.89 1041.78,490.52 1043.44,491.15 1045.10,491.78 1046.76,492.41 1048.42,493.03 1050.08,493.66 1051.74,494.29 1053.41,494.92 1055.07,495.55 1056.73,496.18 1058.39,496.81 1060.05,497.43 1061.71,498.06 1063.37,498.69 1065.03,499.32 1066.69,499.95 1068.35,500.57 1070.02,501.20 1071.68,501.83 1073.34,502.46 1075.00,503.09 1076.66,503.71 1078.32,504.34 1079.98,504.97 1081.64,505.60 1083.30,506.23 1084.96,506.85 1086.62,507.48 1088.29,508.11 1089.95,508.74 1091.61,509.36 1093.27,509.99 1094.93,510.62 1096.59,511.25 1098.25,511.87 1099.91,512.50 1101.57,513.13 1103.23,513.76 1104.89,514.38 1106.56,515.01 1108.22,515.64 1109.88,516.27 1111.54,516.89 1113.20,517.52 1114.86,518.15 1116.52,518.78 1118.18,519.40 1119.84,520.03 1121.50,520.66 1123.17,521.29 1124.83,521.91 1126.49,522.54 1128.15,523.17 1129.81,523.79 1131.47,524.42 1133.13,525.05 1134.79,525.68 1136.45,526.30 1138.11,526.93 1139.77,527.56 1141.44,528.18 1143.10,528.81 1144.76,529.44 1146.42,530.06 1148.08,530.69 1149.74,531.32 1151.40,531.94 1153.06,532.57 1154.72,533.20 1156.38,533.83 1158.05,534.45 1159.71,535.08 1161.37,535.71 1163.03,536.33 1164.69,536.96 1166.35,537.59 1168.01,538.21 1169.67,538.84 1171.33,539.47 1172.99,540.09 1174.65,540.72 1176.32,541.35 1177.98,541.97 1179.64,542.60 1181.30,543.23 1182.96,543.85 1184.62,544.48 1186.28,545.11 1187.94,545.73 1189.60,546.36 1191.26,546.99 1192.92,547.61 1194.59,548.24 1196.25,548.86 1197.91,549.49 1199.57,550.12 1201.23,550.74 1202.89,551.37 1204.55,552.00 1206.21,552.62 1207.87,553.25 1209.53,553.88 1211.20,554.50 1212.86,555.13 1214.52,555.76 1216.18,556.38 1217.84,557.01 1219.50,557.63" fill="none" stroke="#7a0000" stroke-width="1" shape-rendering="crispEdges"/><polyline points="58.50,232.39 59.50,232.36 60.50,232.33 61.50,232.30 62.50,232.26 63.50,232.22 64.50,232.18 65.50,232.14 66.50,232.10 67.50,232.05 68.50,232.00 69.50,231.95 70.50,231.90 71.50,231.85 72.50,231.79 73.50,231.73 74.50,231.67 75.50,231.61 76.50,231.54 77.50,231.48 78.50,231.41 79.50,231.34 80.50,231.27 81.50,231.19 82.50,231.12 83.50,231.04 84.50,230.96 85.50,230.88 86.50,230.79 87.50,230.71 88.50,230.62 89.50,230.53 90.50,230.44 91.50,230.35 92.50,230.26 93.50,230.16 94.50,230.06 95.50,229.96 96.50,229.86 97.50,229.76 98.50,229.66 99.50,229.55 100.50,229.44 101.50,229.34 102.50,229.22 103.50,229.11 104.50,229.00 105.50,228.88 106.50,228.77 107.50,228.65 108.50,228.53 109.50,228.41 110.50,228.29 111.50,228.16 112.50,228.04 113.50,227.91 114.50,227.78 115.50,227.65 116.50,227.52 117.50,227.39 118.50,227.25 119.50,227.12 120.50,226.98 121.50,226.85 122.50,226.71 123.50,226.57 124.50,226.43 125.50,226.28 126.50,226.14 127.50,225.99 128.50,225.85 129.50,225.70 130.50,225.55 131.50,225.40 132.50,225.25 133.50,225.10 134.50,224.94 135.50,224.79 136.50,224.63 137.50,224.48 138.50,224.32 139.50,224.16 140.50,224.00 141.50,223.84 142.50,223.68 143.50,223.52 144.50,223.35 145.50,223.19 146.50,223.03 147.50,222.86 148.50,222.69 149.50,222.52 150.50,222.35 151.50,222.18 152.50,222.01 153.50,221.84 154.50,221.67 155.50,221.50 156.50,221.32 157.50,221.15 158.50,220.97 159.50,220.80 160.50,220.62 161.50,220.44 162.50,220.27 163.50,220.09 164.50,219.91 165.50,219.73 166.50,219.55 167.50,219.36 168.50,219.18 169.50,219.00 170.50,218.82 171.50,218.63 172.50,218.45 173.50,218.26 174.50,218.08 175.50,217.89 176.50,217.71 177.50,217.52 178.50,217.33 179.50,217.14 180.50,216.96 181.50,216.77 182.50,216.58 183.50,216.39 184.50,216.20 185.50,216.01 186.50,215.82 187.50,215.63 188.50,215.44 189.50,215.25 190.50,215.06 191.50,214.86 192.50,214.67 193.50,214.48 194.50,214.29 195.50,214.10 196.50,213.91 197.50,213.72 198.50,213.53 199.50,213.35 200.50,213.16 201.50,212.98 202.50,212.80 203.50,212.62 204.50,212.44 205.50,212.26 206.50,212.09 207.50,211.92 208.50,211.75 209.50,211.59 210.50,211.43 211.50,211.27 212.50,211.12 213.50,210.97 214.50,210.82 215.50,210.68 216.50,210.54 217.50,210.41 218.50,210.28 219.50,210.16 220.50,210.04 221.50,209.93 222.50,209.82 223.50,209.72 224.50,209.62 225.50,209.53 226.50,209.45 227.50,209.37 228.50,209.30 229.50,209.23 230.50,209.18 231.50,209.12 232.50,209.08 233.50,209.05 234.50,209.02 235.50,209.00 236.50,208.98 237.50,208.98 238.50,208.98 239.50,209.00 240.50,209.02 241.50,209.05 242.50,209.08 243.50,209.13 244.50,209.19 245.50,209.26 246.50,209.33 247.50,209.42 248.50,209.52 249.50,209.62 250.50,209.74 251.50,209.87 252.50,210.01 253.50,210.16 254.50,210.32 255.50,210.49 256.50,210.67 257.50,210.86 258.50,211.06 259.50,211.27 260.50,211.49 261.50,211.72 262.50,211.96 263.50,212.20 264.50,212.46 265.50,212.72 266.50,213.00 267.50,213.28 268.50,213.57 269.50,213.87 270.50,214.17 271.50,214.48 272.50,214.80 273.50,215.13 274.50,215.47 275.50,215.81 276.50,216.16 277.50,216.51 278.50,216.88 279.50,217.24 280.50,217.62 281.50,218.00 282.50,218.39 283.50,218.78 284.50,219.18 285.50,219.58 286.50,219.99 287.50,220.41 288.50,220.83 289.50,221.26 290.50,221.69 291.50,222.12 292.50,222.57 293.50,223.01 294.50,223.47 295.50,223.92 296.50,224.38 297.50,224.85 298.50,225.32 299.50,225.80 300.50,226.28 301.50,226.76 302.50,227.25 303.50,227.74 304.50,228.24 305.50,228.74 306.50,229.24 307.50,229.75 308.50,230.26 309.50,230.78 310.50,231.30 311.50,231.82 312.50,232.34 313.50,232.87 314.50,233.40 315.50,233.94 316.50,234.48 317.50,235.02 318.50,235.56 319.50,236.11 320.50,236.66 321.50,237.21 322.50,237.76 323.50,238.32 324.50,238.87 325.50,239.43 326.50,240.00 327.50,240.56 328.50,241.13 329.50,241.70 330.50,242.26 331.50,242.84 332.50,243.41 333.50,243.98 334.50,244.56 335.50,245.13 336.50,245.71 337.50,246.29 338.50,246.87 339.50,247.45 340.50,248.03 341.50,248.61 342.50,249.20 343.50,249.78 344.50,250.36 345.50,250.95 346.50,251.53 347.50,252.12 348.50,252.70 349.50,253.28 350.50,253.87 351.50,254.45 352.50,255.04 353.50,255.62 354.50,256.20 355.50,256.78 356.50,257.37 357.50,257.95 358.50,258.53 359.50,259.10 360.50,259.68 361.50,260.26 362.50,260.83 363.50,261.41 364.50,261.98 365.50,262.55 366.50,263.12 367.50,263.69 368.50,264.26 369.50,264.82 370.50,265.38 371.50,265.94 372.50,266.50 373.50,267.06 374.50,267.61 375.50,268.16 376.50,268.71 377.50,269.26 378.50,269.80 379.50,270.34 380.50,270.88 381.50,271.42 382.50,271.95 383.50,272.49 384.50,273.02 385.50,273.54 386.50,274.07 387.50,274.59 388.50,275.11 389.50,275.63 390.50,276.15 391.50,276.66 392.50,277.17 393.50,277.68 394.50,278.19 395.50,278.70 396.50,279.20 397.50,279.70 398.50,280.20 399.50,280.70 400.50,281.19 401.50,281.69 402.50,282.18 403.50,282.67 404.50,283.16 405.50,283.65 406.50,284.13 407.50,284.62 408.50,285.10 409.50,285.58 410.50,286.06 411.50,286.53 412.50,287.01 413.50,287.48 414.50,287.95 415.50,288.42 416.50,288.89 417.50,289.36 418.50,289.83 419.50,290.29 420.50,290.76 421.50,291.22 422.50,291.68 423.50,292.14 424.50,292.60 425.50,293.05 426.50,293.51 427.50,293.96 428.50,294.42 429.50,294.87 430.50,295.32 431.50,295.77 432.50,296.22 433.50,296.67 434.50,297.12 435.50,297.56 436.50,298.01 437.50,298.45 438.50,298.90 439.50,299.34 440.50,299.78 441.50,300.22 442.50,300.66 443.50,301.10 444.50,301.54 445.50,301.98 446.50,302.41 447.50,302.85 448.50,303.29 449.50,303.72 450.50,304.16 451.50,304.59 452.50,305.03 453.50,305.46 454.50,305.89 455.50,306.32 456.50,306.76 457.50,307.19 458.50,307.62 459.50,308.05 460.50,308.48 461.50,308.91 462.50,309.34 463.50,309.77 464.50,310.20 465.50,310.63 466.50,311.06 467.50,311.49 468.50,311.92 469.50,312.35 470.50,312.78 471.50,313.20 472.50,313.63 473.50,314.06 474.50,314.49 475.50,314.92 476.50,315.34 477.50,315.77 478.50,316.20 479.50,316.63 480.50,317.05 481.50,317.48 482.50,317.91 483.50,318.33 484.50,318.76 485.50,319.18 486.50,319.61 487.50,320.04 488.50,320.46 489.50,320.89 490.50,321.31 491.50,321.74 492.50,322.16 493.50,322.59 494.50,323.01 495.50,323.44 496.50,323.86 497.50,324.28 498.50,324.71 499.50,325.13 500.50,325.56 501.50,325.98 502.50,326.40 503.50,326.83 504.50,327.25 505.50,327.67 506.50,328.09 507.50,328.52 508.50,328.94 509.50,329.36 510.50,329.78 511.50,330.20 512.50,330.62 513.50,331.05 514.50,331.47 515.50,331.89 516.50,332.31 517.50,332.73 518.50,333.15 519.50,333.57 520.50,333.99 521.50,334.41 522.50,334.83 523.50,335.25 524.50,335.67 525.50,336.09 526.50,336.50 527.50,336.92 528.50,337.34 529.50,337.76 530.50,338.18 531.50,338.60 532.50,339.01 533.50,339.43 534.50,339.85 535.50,340.27 536.50,340.68 537.50,341.10 538.50,341.52 539.50,341.93 540.50,342.35 541.50,342.76 542.50,343.18 543.50,343.60 544.50,344.01 545.50,344.43 546.50,344.84 547.50,345.26 548.50,345.67 549.50,346.09 550.50,346.50 551.50,346.92 552.50,347.33 553.50,347.74 554.50,348.16 555.50,348.57 556.50,348.98 557.50,349.40 558.50,349.81 559.50,350.22 560.50,350.64 561.50,351.05 562.50,351.46 563.50,351.87 564.50,352.28 565.50,352.70 566.50,353.11 567.50,353.52 568.50,353.93 569.50,354.34 570.50,354.75 571.50,355.16 572.50,355.57 573.50,355.98 574.50,356.39 575.50,356.80 576.50,357.21 577.50,357.62 578.50,358.03 579.50,358.44 580.50,358.85 581.50,359.26 582.50,359.67 583.50,360.08 584.50,360.48 585.50,360.89 586.50,361.30 587.50,361.71 588.50,362.12 589.50,362.52 590.50,362.93 591.50,363.34 592.50,363.75 593.50,364.15 594.50,364.56 595.50,364.97 596.50,365.37 597.50,365.78 598.50,366.18 599.50,366.59 600.50,367.00 601.50,367.40 602.50,367.81 603.50,368.21 604.50,368.62 605.50,369.02 606.50,369.43 607.50,369.83 608.50,370.24 609.50,370.64 610.50,371.05 611.50,371.45 612.50,371.85 613.50,372.26 614.50,372.66 615.50,373.06 616.50,373.47 617.50,373.87 618.50,374.27 619.50,374.68 620.50,375.08 621.50,375.48 622.50,375.89 623.50,376.29 624.50,376.69 625.50,377.09 626.50,377.49 627.50,377.90 628.50,378.30 629.50,378.70 630.50,379.10 631.50,379.50 632.50,379.90 633.50,380.30 634.50,380.70 635.50,381.10 636.50,381.50 637.50,381.91 638.50,382.31 639.50,382.71 640.50,383.11 641.50,383.51 642.50,383.90 643.50,384.30 644.50,384.70 645.50,385.10 646.50,385.50 647.50,385.90 648.50,386.30 649.50,386.70 650.50,387.10 651.50,387.50 652.50,387.89 653.50,388.29 654.50,388.69 655.50,389.09 656.50,389.49 657.50,389.88 658.50,390.28 659.50,390.68 660.50,391.08 661.50,391.47 662.50,391.87 663.50,392.27 664.50,392.66 665.50,393.06 666.50,393.46 667.50,393.85 668.50,394.25 669.50,394.65 670.50,395.04 671.50,395.44 672.50,395.84 673.50,396.23 674.50,396.63 675.50,397.02 676.50,397.42 677.50,397.81 678.50,398.21 679.50,398.60 680.50,399.00 681.50,399.39 682.50,399.79 683.50,400.18 684.50,400.58 685.50,400.97 686.50,401.37 687.50,401.76 688.50,402.15 689.50,402.55 690.50,402.94 691.50,403.34 692.50,403.73 693.50,404.12 694.50,404.52 695.50,404.91 696.50,405.30 697.50,405.70 698.50,406.09 699.50,406.48 700.50,406.88 701.50,407.27 702.50,407.66 703.50,408.05 704.50,408.45 705.50,408.84 706.50,409.23 707.50,409.62 708.50,410.02 709.50,410.41 710.50,410.80 711.50,411.19 712.50,411.58 713.50,411.97 714.50,412.37 715.50,412.76 716.50,413.15 717.50,413.54 718.50,413.93 719.50,414.32 720.50,414.71 721.50,415.10 722.50,415.49 723.50,415.89 724.50,416.28 725.50,416.67 726.50,417.06 727.50,417.45 728.50,417.84 729.50,418.23 730.50,418.62 731.50,419.01 732.50,419.40 733.50,419.79 734.50,420.18 735.50,420.57 736.50,420.96 737.50,421.35 738.50,421.74 739.50,422.13 740.50,422.51 741.50,422.90 742.50,423.29 743.50,423.68 744.50,424.07 745.50,424.46 746.50,424.85 747.50,425.24 748.50,425.63 749.50,426.01 750.50,426.40 751.50,426.79 752.50,427.18 753.50,427.57 754.50,427.96 755.50,428.34 756.50,428.73 757.50,429.12 758.50,429.51 759.50,429.90 760.50,430.28 761.50,430.67 762.50,431.06 763.50,431.45 764.50,431.84 765.50,432.22 766.50,432.61 767.50,433.00 768.50,433.39 769.50,433.77 770.50,434.16 771.50,434.55 772.50,434.93 773.50,435.32 774.50,435.71 775.50,436.10 776.50,436.48 777.50,436.87 778.50,437.26 779.50,437.64 780.50,438.03 781.50,438.42 782.50,438.80 783.50,439.19 784.50,439.58 785.50,439.96 786.50,440.35 787.50,440.73 788.50,441.12 789.50,441.51 790.50,441.89 791.50,442.28 792.50,442.66 793.50,443.05 794.50,443.44 795.50,443.82 796.50,444.21 797.50,444.59 798.50,444.98 799.50,445.37 800.50,445.75 801.50,446.14 802.50,446.52 803.50,446.91 804.50,447.29 805.50,447.68 806.50,448.06 807.50,448.45 808.50,448.84 809.50,449.22 810.50,449.61 811.50,449.99 812.50,450.38 813.50,450.76 814.50,451.15 815.50,451.53 816.50,451.92 817.50,452.30 818.50,452.69 819.50,453.07 820.50,453.46 821.50,453.84 822.50,454.23 823.50,454.61 824.50,455.00 825.50,455.38 826.50,455.77 827.50,456.15 828.50,456.53 829.50,456.92 830.50,457.30 831.50,457.69 832.50,458.07 833.50,458.46 834.50,458.84 835.50,459.23 836.50,459.61 837.50,460.00 838.50,460.38 839.50,460.76 840.50,461.15 841.50,461.53 842.50,461.92 843.50,462.30 844.50,462.69 845.50,463.07 846.50,463.46 847.50,463.84 848.50,464.22 849.50,464.61 850.50,464.99 851.50,465.38 852.50,465.76 853.50,466.14 854.50,466.53 855.50,466.91 856.50,467.30 857.50,467.68 858.50,468.07 859.50,468.45 860.50,468.83 861.50,469.22 862.50,469.60 863.50,469.99 864.50,470.37 865.50,470.75 866.50,471.14 867.50,471.52 868.50,471.91 869.50,472.29 870.50,472.67 871.50,473.06 872.50,473.44 873.50,473.83 874.50,474.21 875.50,474.59 876.50,474.98 877.50,475.36 878.50,475.75 879.50,476.13 880.50,476.51 881.50,476.90 882.50,477.28 883.50,477.67 884.50,478.05 885.50,478.43 886.50,478.82 887.50,479.20 888.50,479.59 889.50,479.97 890.50,480.36 891.50,480.74 892.50,481.12 893.50,481.51 894.50,481.89 895.50,482.28 896.50,482.66 897.50,483.04 898.50,483.43 899.50,483.81 900.50,484.20 901.50,484.58 902.50,484.97 903.50,485.35 904.50,485.73 905.50,486.12 906.50,486.50 907.50,486.89 908.50,487.27 909.50,487.66 910.50,488.04 911.50,488.42 912.50,488.81 913.50,489.19 914.50,489.58 915.50,489.96 916.50,490.35 917.50,490.73 918.50,491.12 919.50,491.50 920.50,491.88 921.50,492.27 922.50,492.65 923.50,493.04 924.50,493.42 925.50,493.81 926.50,494.19 927.50,494.58 928.50,494.96 929.50,495.35 930.50,495.73 931.50,496.12 932.50,496.50 933.50,496.89 934.50,497.27 935.50,497.66 936.50,498.04 937.50,498.43 938.50,498.81 939.50,499.20 940.50,499.58 941.50,499.97 942.50,500.35 943.50,500.74 944.50,501.12 945.50,501.51 946.50,501.89 947.50,502.28 948.50,502.67 949.50,503.05 950.50,503.44 951.50,503.82 952.50,504.21 953.50,504.59 954.50,504.98 955.50,505.37 956.50,505.75 957.50,506.14 958.50,506.52 959.50,506.91 960.50,507.30 961.50,507.68 962.50,508.07 963.50,508.45 964.50,508.84 965.50,509.23 966.50,509.61 967.50,510.00 968.50,510.39 969.50,510.77 970.50,511.16 971.50,511.55 972.50,511.93 973.50,512.32 974.50,512.71 975.50,513.09 976.50,513.48 977.50,513.87 978.50,514.25 979.50,514.64 980.50,515.03 981.50,515.42 982.50,515.80 983.50,516.19 984.50,516.58 985.50,516.96 986.50,517.35 987.50,517.74 988.50,518.13 989.50,518.52 990.50,518.90 991.50,519.29 992.50,519.68 993.50,520.07 994.50,520.45 995.50,520.84 996.50,521.23 997.50,521.62 998.50,522.01 999.50,522.40 1000.50,522.78 1001.50,523.17 1002.50,523.56 1003.50,523.95 1004.50,524.34 1005.50,524.73 1006.50,525.12 1007.50,525.51 1008.50,525.89 1009.50,526.28 1010.50,526.67 1011.50,527.06 1012.50,527.45 1013.50,527.84 1014.50,528.23 1015.50,528.62 1016.50,529.01 1017.50,529.40 1018.50,529.79 1019.50,530.18 1020.50,530.57 1021.50,530.96 1022.50,531.35 1023.50,531.74 1024.50,532.13 1025.50,532.52 1026.50,532.91 1027.50,533.30 1028.50,533.69 1029.50,534.08 1030.50,534.47 1031.50,534.87 1032.50,535.26 1033.50,535.65 1034.50,536.04 1035.50,536.43 1036.50,536.82 1037.50,537.21 1038.50,537.60 1039.50,538.00 1040.50,538.39 1041.50,538.78 1042.50,539.17 1043.50,539.56 1044.50,539.96 1045.50,540.35 1046.50,540.74 1047.50,541.13 1048.50,541.53 1049.50,541.92 1050.50,542.31 1051.50,542.70 1052.50,543.10 1053.50,543.49 1054.50,543.88 1055.50,544.28 1056.50,544.67 1057.50,545.06 1058.50,545.46 1059.50,545.85 1060.50,546.25 1061.50,546.64 1062.50,547.04 1063.50,547.43 1064.50,547.82 1065.50,548.22 1066.50,548.62 1067.50,549.01 1068.50,549.41 1069.50,549.80 1070.50,550.20 1071.50,550.59 1072.50,550.99 1073.50,551.39 1074.50,551.78 1075.50,552.18 1076.50,552.58 1077.50,552.98 1078.50,553.37 1079.50,553.77 1080.50,554.17 1081.50,554.57 1082.50,554.97 1083.50,555.37 1084.50,555.77 1085.50,556.16 1086.50,556.56 1087.50,556.96 1088.50,557.37 1089.50,557.77 1090.50,558.17 1091.50,558.57 1092.50,558.97 1093.50,559.37 1094.50,559.77 1095.50,560.18 1096.50,560.58 1097.50,560.98 1098.50,561.38 1099.50,561.79 1100.50,562.19 1101.50,562.60 1102.50,563.00 1103.50,563.41 1104.50,563.81 1105.50,564.22 1106.50,564.62 1107.50,565.03 1108.50,565.44 1109.50,565.84 1110.50,566.25 1111.50,566.66 1112.50,567.07 1113.50,567.47 1114.50,567.88 1115.50,568.29 1116.50,568.70 1117.50,569.11 1118.50,569.52 1119.50,569.93 1120.50,570.34 1121.50,570.76 1122.50,571.17 1123.50,571.58 1124.50,571.99 1125.50,572.41 1126.50,572.82 1127.50,573.23 1128.50,573.65 1129.50,574.06 1130.50,574.48 1131.50,574.90 1132.50,575.31 1133.50,575.73 1134.50,576.15 1135.50,576.56 1136.50,576.98 1137.50,577.40 1138.50,577.82 1139.50,578.24 1140.50,578.66 1141.50,579.08 1142.50,579.50 1143.50,579.92 1144.50,580.35 1145.50,580.77 1146.50,581.19 1147.50,581.62 1148.50,582.04 1149.50,582.47 1150.50,582.89 1151.50,583.32 1152.50,583.74 1153.50,584.17 1154.50,584.60 1155.50,585.03 1156.50,585.45 1157.50,585.88 1158.50,586.31 1159.50,586.74 1160.50,587.17 1161.50,587.60 1162.50,588.03 1163.50,588.46 1164.50,588.89 1165.50,589.32 1166.50,589.75 1167.50,590.18 1168.50,590.61 1169.50,591.03 1170.50,591.46 1171.50,591.89 1172.50,592.32 1173.50,592.74 1174.50,593.17 1175.50,593.59 1176.50,594.02 1177.50,594.44 1178.50,594.86 1179.50,595.28 1180.50,595.70 1181.50,596.12 1182.50,596.54 1183.50,596.96 1184.50,597.37 1185.50,597.79 1186.50,598.20 1187.50,598.61 1188.50,599.02 1189.50,599.43 1190.50,599.84 1191.50,600.24 1192.50,600.64 1193.50,601.04 1194.50,601.44 1195.50,601.84 1196.50,602.24 1197.50,602.63 1198.50,603.02 1199.50,603.41 1200.50,603.79 1201.50,604.18 1202.50,604.56 1203.50,604.94 1204.50,605.31 1205.50,605.69 1206.50,606.06 1207.50,606.43 1208.50,606.79 1209.50,607.16 1210.50,607.52 1211.50,607.87 1212.50,608.23 1213.50,608.58 1214.50,608.92 1215.50,609.27 1216.50,609.61 1217.50,609.95 1218.50,610.28 1219.50,610.61" fill="none" stroke="#0e0e48" stroke-width="1" shape-rendering="crispEdges"/><rect x="2" y="671" width="1276" height="331" fill="#e8eefc"/><rect x="2" y="671" width="1276" height="1" fill="#444444"/><rect x="2" y="671" width="1" height="331" fill="#444444"/><rect x="1277" y="671" width="1" height="331" fill="#444444"/><rect x="2" y="1001" width="1276" height="1" fill="#444444"/><rect x="3" y="672" width="1274" height="1" fill="#f6f9ff"/><rect x="3" y="672" width="1" height="329" fill="#f6f9ff"/><rect x="3" y="1000" width="1274" height="1" fill="#f6f9ff"/><rect x="1276" y="672" width="1" height="329" fill="#f6f9ff"/><rect x="2" y="670" width="1276" height="1" fill="#a8a8a8"/><g transform="translate(14,682)" shape-rendering="crispEdges"><rect x="0" y="7" width="3" height="2" fill="#0000ff"/><rect x="3" y="3" width="2" height="9" fill="#0000ff"/><path d="M5 5 L10.5 -0.5 M5 9.5 L11.5 16" stroke="#0000ff" stroke-width="1.1" shape-rendering="geometricPrecision"/><path d="M6.5 11 L10 14.5 L10.5 11.5 Z" fill="#0000ff" stroke="#0000ff" stroke-width="0.8"/></g><text x="32.15" y="695" font-size="12" fill="#a09a90" font-weight="normal" textLength="114.05" lengthAdjust="spacingAndGlyphs">GyratorIRF820_AC.asc</text><rect x="1210.5" y="681.5" width="17" height="17" fill="#e8eefc" stroke="#8c9ab0"/><rect x="1214" y="690" width="9" height="3" fill="#000"/><rect x="1230.5" y="681.5" width="17" height="17" fill="#e8eefc" stroke="#8c9ab0"/><rect x="1235.5" y="686.5" width="7" height="6" fill="none" stroke="#000" stroke-width="2"/><rect x="1250.5" y="681.5" width="17" height="17" fill="#e8eefc" stroke="#8c9ab0"/><path d="M1255 686.5 L1262.5 692.5 M1262.5 686.5 L1255 692.5" stroke="#000" stroke-width="2.6"/><rect x="10" y="702" width="1260" height="1" fill="#a0a0a0"/><rect x="10" y="702" width="1" height="292" fill="#a0a0a0"/><rect x="11" y="703" width="1258" height="1" fill="#696969"/><rect x="11" y="703" width="1" height="290" fill="#696969"/><rect x="11" y="992" width="1258" height="1" fill="#e3e3e3"/><rect x="1268" y="703" width="1" height="290" fill="#e3e3e3"/><rect x="10" y="993" width="1260" height="1" fill="#ffffff"/><rect x="1269" y="702" width="1" height="292" fill="#ffffff"/><rect x="12" y="704" width="1256" height="288" fill="#ffffec"/><rect x="0" y="1002" width="1280" height="1" fill="#f0f0f0"/><rect x="0" y="1003" width="1280" height="1" fill="#e3e3e3"/><rect x="0" y="1004" width="1280" height="1" fill="#ffffff"/><rect x="0" y="1005" width="1280" height="19" fill="#ffffff"/><rect x="0" y="1005" width="1280" height="1" fill="#a0a0a0"/><rect x="0" y="1005" width="1" height="19" fill="#a0a0a0"/><rect x="0" y="1023" width="1280" height="1" fill="#a0a0a0"/><rect x="1279" y="1005" width="1" height="19" fill="#c8c8c8"/><text x="1.2999999999999998" y="1019.5" font-size="11.5" fill="#000" font-weight="normal" textLength="61.00000000000001" lengthAdjust="spacingAndGlyphs">x = 2.664Hz</text><text x="73.60000000000001" y="1019.5" font-size="11.5" fill="#000" font-weight="normal" textLength="121.5" lengthAdjust="spacingAndGlyphs">y = -10.711dB, -46.778°</text><g shape-rendering="crispEdges"><path d="M43.5,743.5 L43.5,835.5" stroke="#0000ff" stroke-width="1" fill="none" stroke-linecap="square"/><path d="M43.5,743.5 L69.5,743.5" stroke="#0000ff" stroke-width="1" fill="none" stroke-linecap="square"/><path d="M43.5,835 L43.5,846.5" stroke="#000080" stroke-width="1" fill="none" /><path d="M43.5,888.5 L43.5,900" stroke="#000080" stroke-width="1" fill="none" /><path d="M43.5,900.5 L43.5,955.5" stroke="#0000ff" stroke-width="1" fill="none" stroke-linecap="square"/><path d="M28.5,955.5 L58.5,955.5 L43.5,970.5 Z" stroke="#0000ff" stroke-width="1" fill="none" /><circle cx="43" cy="867.3" r="20.8" fill="none" stroke="#000080" stroke-width="1" shape-rendering="geometricPrecision"/><path d="M38,857.5 L48,857.5" stroke="#000080" stroke-width="1" fill="none" /><path d="M43.5,852 L43.5,863" stroke="#000080" stroke-width="1" fill="none" /><path d="M38,879.5 L49,879.5" stroke="#000080" stroke-width="1" fill="none" /><path d="M136.5,743.5 L190.5,743.5" stroke="#0000ff" stroke-width="1" fill="none" stroke-linecap="square"/><rect x="159" y="740" width="7" height="7" fill="#0000ff"/><path d="M162.5,743.5 L162.5,875.5 L163.5,875.5" stroke="#0000ff" stroke-width="1" fill="none" stroke-linecap="square"/><path d="M190,743.5 L202.5,743.5 L202.5,769" stroke="#000080" stroke-width="1" fill="none" /><path d="M195,769.5 L209,769.5" stroke="#000080" stroke-width="1" fill="none" /><path d="M228.5,743.5 L228.5,749.5" stroke="#000080" stroke-width="1" fill="none" /><path d="M225.5,749.5 L232.5,749.5 L228.5,766.5 Z" stroke="#000080" stroke-width="1" fill="none" /><path d="M228.5,766 L228.5,769.5" stroke="#000080" stroke-width="1" fill="none" /><path d="M222,769.5 L236,769.5" stroke="#000080" stroke-width="1" fill="none" /><path d="M228.5,743.5 L268,743.5" stroke="#000080" stroke-width="1" fill="none" /><path d="M255.5,743.5 L255.5,769" stroke="#000080" stroke-width="1" fill="none" /><path d="M248,769.5 L262,769.5" stroke="#000080" stroke-width="1" fill="none" /><path d="M202,776.5 L255.5,776.5 L255.5,783" stroke="#000080" stroke-width="1" fill="none" /><path d="M255.5,783.5 L255.5,796.5" stroke="#0000ff" stroke-width="1" fill="none" stroke-linecap="square"/><path d="M255.50,796.00 L255.50,804.20 L262.00,808.40 L249.00,816.40 L262.00,824.40 L249.00,833.20 L262.00,841.40 L249.00,849.30 L255.50,852.80 L255.50,861.50" stroke="#000080" stroke-width="1" fill="none" /><path d="M255.5,861.5 L255.5,862" stroke="#000080" stroke-width="1" fill="none" /><path d="M255.5,861.5 L255.5,968.5" stroke="#0000ff" stroke-width="1" fill="none" stroke-linecap="square"/><rect x="252" y="872" width="7" height="7" fill="#0000ff"/><rect x="252" y="912" width="7" height="7" fill="#0000ff"/><path d="M162.5,875.5 L170,875.5" stroke="#000080" stroke-width="1" fill="none" /><path d="M162.00,875.50 L170.20,875.50 L174.40,869.00 L182.40,882.00 L190.40,869.00 L199.20,882.00 L207.40,869.00 L215.30,882.00 L218.80,875.50 L227.50,875.50" stroke="#000080" stroke-width="1" fill="none" /><path d="M227.5,875.5 L255.5,875.5" stroke="#0000ff" stroke-width="1" fill="none" stroke-linecap="square"/><path d="M255.5,875.5 L282.5,875.5" stroke="#0000ff" stroke-width="1" fill="none" stroke-linecap="square"/><path d="M282.00,875.50 L290.20,875.50 L294.40,869.00 L302.40,882.00 L310.40,869.00 L319.20,882.00 L327.40,869.00 L335.30,882.00 L338.80,875.50 L347.50,875.50" stroke="#000080" stroke-width="1" fill="none" /><path d="M347.5,875.5 L401.5,875.5" stroke="#0000ff" stroke-width="1" fill="none" stroke-linecap="square"/><path d="M255.5,915.5 L296.5,915.5" stroke="#0000ff" stroke-width="1" fill="none" stroke-linecap="square"/><path d="M296,915.5 L318.5,915.5" stroke="#000080" stroke-width="1" fill="none" /><path d="M318.5,902 L318.5,929" stroke="#000080" stroke-width="1" fill="none" /><path d="M328.5,902 Q320.5,915.5 328.5,929" stroke="#000080" stroke-width="1" fill="none" /><path d="M324.5,915.5 L348,915.5" stroke="#000080" stroke-width="1" fill="none" /><path d="M348.5,915.5 L401.5,915.5" stroke="#0000ff" stroke-width="1" fill="none" stroke-linecap="square"/><path d="M305,922.5 L312,922.5" stroke="#000080" stroke-width="1" fill="none" /><path d="M308.5,919 L308.5,926" stroke="#000080" stroke-width="1" fill="none" /><path d="M255.5,968.5 L296.5,968.5" stroke="#0000ff" stroke-width="1" fill="none" stroke-linecap="square"/><path d="M296,968.5 L311.5,968.5" stroke="#000080" stroke-width="1" fill="none" /><path d="M308.3,952.3 L311.5,955.3 L311.5,981.5 L314.6,985.4" stroke="#000080" stroke-width="1" fill="none" /><path d="M311.5,968.5 L331.5,955.5 L331.5,981.5 Z" stroke="#000080" stroke-width="1" fill="none" /><path d="M331.5,968.5 L348,968.5" stroke="#000080" stroke-width="1" fill="none" /><path d="M348.5,968.5 L401.5,968.5" stroke="#0000ff" stroke-width="1" fill="none" stroke-linecap="square"/><path d="M268.5,743.5 L296.5,743.5" stroke="#0000ff" stroke-width="1" fill="none" stroke-linecap="square"/><path d="M296.00,743.50 L304.20,743.50 L308.40,737.00 L316.40,750.00 L324.40,737.00 L333.20,750.00 L341.40,737.00 L349.30,750.00 L352.80,743.50 L361.50,743.50" stroke="#000080" stroke-width="1" fill="none" /><path d="M361.5,743.5 L561.5,743.5" stroke="#0000ff" stroke-width="1" fill="none" stroke-linecap="square"/><path d="M401.5,743.5 L401.5,968.5" stroke="#0000ff" stroke-width="1" fill="none" stroke-linecap="square"/><rect x="398" y="740" width="7" height="7" fill="#0000ff"/><rect x="398" y="872" width="7" height="7" fill="#0000ff"/><rect x="398" y="912" width="7" height="7" fill="#0000ff"/><rect x="451" y="740" width="7" height="7" fill="#0000ff"/><rect x="530" y="740" width="7" height="7" fill="#0000ff"/><path d="M454.5,743.5 L454.5,784.5" stroke="#0000ff" stroke-width="1" fill="none" stroke-linecap="square"/><path d="M454.5,784 L454.5,806.5" stroke="#000080" stroke-width="1" fill="none" /><path d="M440,806.5 L468,806.5" stroke="#000080" stroke-width="1" fill="none" /><path d="M440.5,816.5 Q454.5,808.5 468,816.5" stroke="#000080" stroke-width="1" fill="none" /><path d="M454.5,812.5 L454.5,836" stroke="#000080" stroke-width="1" fill="none" /><path d="M454.5,836.5 L454.5,942.5" stroke="#0000ff" stroke-width="1" fill="none" stroke-linecap="square"/><path d="M439.5,942.5 L469.5,942.5 L454.5,957.5 Z" stroke="#0000ff" stroke-width="1" fill="none" /><path d="M444,796.5 L451,796.5" stroke="#000080" stroke-width="1" fill="none" /><path d="M447.5,793 L447.5,800" stroke="#000080" stroke-width="1" fill="none" /><path d="M533.5,743.5 L533.5,770.5" stroke="#0000ff" stroke-width="1" fill="none" stroke-linecap="square"/><path d="M533.50,770.00 L533.50,778.20 L540.00,782.40 L527.00,790.40 L540.00,798.40 L527.00,807.20 L540.00,815.40 L527.00,823.30 L533.50,826.80 L533.50,835.50" stroke="#000080" stroke-width="1" fill="none" /><path d="M533.5,835.5 L533.5,942.5" stroke="#0000ff" stroke-width="1" fill="none" stroke-linecap="square"/><path d="M518.5,942.5 L548.5,942.5 L533.5,957.5 Z" stroke="#0000ff" stroke-width="1" fill="none" /><path d="M651.5,743.5 L680.5,743.5" stroke="#0000ff" stroke-width="1" fill="none" stroke-linecap="square"/><path d="M679.5,743.5 L692.3,743.5" stroke="#000080" stroke-width="1" fill="none" /><path d="M692.3,743.5 C692.3,749 696,752.3 700.5,752.3 C704,752.3 708.7,747 708.7,741 C708.7,737 707,735.1 705.5,735.1 C704,735.1 702.4,737 702.4,741 C702.4,747 707,752.3 712.5,752.3 C716,752.3 722,747 722,741 C722,737.5 720,736.2 718.5,736.2 C717,736.2 715,737.5 715,741 C715,747 719.5,752.3 723.7,752.3 C728,752.3 731.4,749 731.4,743.5 L745.6,743.5" stroke="#000080" stroke-width="1" fill="none" /><path d="M745.5,743.5 L759.5,743.5" stroke="#0000ff" stroke-width="1" fill="none" stroke-linecap="square"/><path d="M759.00,743.50 L767.20,743.50 L771.40,737.00 L779.40,750.00 L787.40,737.00 L796.20,750.00 L804.40,737.00 L812.30,750.00 L815.80,743.50 L824.50,743.50" stroke="#000080" stroke-width="1" fill="none" /><path d="M824.5,743.5 L917.5,743.5" stroke="#0000ff" stroke-width="1" fill="none" stroke-linecap="square"/><rect x="835" y="740" width="7" height="7" fill="#0000ff"/><rect x="875" y="740" width="7" height="7" fill="#0000ff"/><path d="M838.5,743.5 L838.5,837.5" stroke="#0000ff" stroke-width="1" fill="none" stroke-linecap="square"/><path d="M838.5,837 L838.5,859.5" stroke="#000080" stroke-width="1" fill="none" /><path d="M825,859.5 L852,859.5" stroke="#000080" stroke-width="1" fill="none" /><path d="M825.5,869.5 Q838.5,861.5 852,869.5" stroke="#000080" stroke-width="1" fill="none" /><path d="M838.5,865.5 L838.5,889" stroke="#000080" stroke-width="1" fill="none" /><path d="M838.5,889.5 L838.5,942.5" stroke="#0000ff" stroke-width="1" fill="none" stroke-linecap="square"/><path d="M823.5,942.5 L853.5,942.5 L838.5,957.5 Z" stroke="#0000ff" stroke-width="1" fill="none" /><path d="M828,849.5 L835,849.5" stroke="#000080" stroke-width="1" fill="none" /><path d="M831.5,846 L831.5,853" stroke="#000080" stroke-width="1" fill="none" /><path d="M878.5,743.5 L878.5,823.5" stroke="#0000ff" stroke-width="1" fill="none" stroke-linecap="square"/><path d="M878.50,823.20 L878.50,831.40 L885.00,835.60 L872.00,843.60 L885.00,851.60 L872.00,860.40 L885.00,868.60 L872.00,876.50 L878.50,880.00 L878.50,888.70" stroke="#000080" stroke-width="1" fill="none" /><path d="M878.5,888.5 L878.5,942.5" stroke="#0000ff" stroke-width="1" fill="none" stroke-linecap="square"/><path d="M863.5,942.5 L893.5,942.5 L878.5,957.5 Z" stroke="#0000ff" stroke-width="1" fill="none" /><path d="M1009.5,743.5 L1038.5,743.5" stroke="#0000ff" stroke-width="1" fill="none" stroke-linecap="square"/><path d="M1038.00,743.50 L1046.20,743.50 L1050.40,737.00 L1058.40,750.00 L1066.40,737.00 L1075.20,750.00 L1083.40,737.00 L1091.30,750.00 L1094.80,743.50 L1103.50,743.50" stroke="#000080" stroke-width="1" fill="none" /><path d="M1103.5,743.5 L1197.5,743.5" stroke="#0000ff" stroke-width="1" fill="none" stroke-linecap="square"/><rect x="1113" y="740" width="7" height="7" fill="#0000ff"/><rect x="1153" y="740" width="7" height="7" fill="#0000ff"/><path d="M1116.5,743.5 L1116.5,837.5" stroke="#0000ff" stroke-width="1" fill="none" stroke-linecap="square"/><path d="M1116.5,837 L1116.5,859.5" stroke="#000080" stroke-width="1" fill="none" /><path d="M1103,859.5 L1130,859.5" stroke="#000080" stroke-width="1" fill="none" /><path d="M1103.5,869.5 Q1116.5,861.5 1130,869.5" stroke="#000080" stroke-width="1" fill="none" /><path d="M1116.5,865.5 L1116.5,889" stroke="#000080" stroke-width="1" fill="none" /><path d="M1116.5,889.5 L1116.5,942.5" stroke="#0000ff" stroke-width="1" fill="none" stroke-linecap="square"/><path d="M1101.5,942.5 L1131.5,942.5 L1116.5,957.5 Z" stroke="#0000ff" stroke-width="1" fill="none" /><path d="M1106,849.5 L1113,849.5" stroke="#000080" stroke-width="1" fill="none" /><path d="M1109.5,846 L1109.5,853" stroke="#000080" stroke-width="1" fill="none" /><path d="M1156.5,743.5 L1156.5,823.5" stroke="#0000ff" stroke-width="1" fill="none" stroke-linecap="square"/><path d="M1156.50,823.20 L1156.50,831.40 L1163.00,835.60 L1150.00,843.60 L1163.00,851.60 L1150.00,860.40 L1163.00,868.60 L1150.00,876.50 L1156.50,880.00 L1156.50,888.70" stroke="#000080" stroke-width="1" fill="none" /><path d="M1156.5,888.5 L1156.5,942.5" stroke="#0000ff" stroke-width="1" fill="none" stroke-linecap="square"/><path d="M1141.5,942.5 L1171.5,942.5 L1156.5,957.5 Z" stroke="#0000ff" stroke-width="1" fill="none" /></g><text x="69" y="750" font-size="19" fill="#000" font-weight="bold" text-anchor="start" >IN</text><text x="117.75" y="750" font-size="19" fill="#000" font-weight="bold" text-anchor="start" >IN</text><text x="172.75" y="732.5" font-size="19" fill="#000" font-weight="bold" text-anchor="start" >M1</text><text x="212.75" y="731.5" font-size="19" fill="#000" font-weight="bold" text-anchor="start" >IRF820</text><text x="216.5" y="819" font-size="19" fill="#000" font-weight="bold" text-anchor="start" >R4</text><text x="210" y="840" font-size="19" fill="#000" font-weight="bold" text-anchor="start" >10k</text><text x="315.25" y="771.25" font-size="19" fill="#000" font-weight="bold" text-anchor="start" >R3</text><text x="316" y="791.25" font-size="19" fill="#000" font-weight="bold" text-anchor="start" >10</text><text x="305.25" y="836.25" font-size="19" fill="#000" font-weight="bold" text-anchor="start" >R2</text><text x="300.25" y="857.5" font-size="19" fill="#000" font-weight="bold" text-anchor="start" >47k</text><text x="184" y="905" font-size="19" fill="#000" font-weight="bold" text-anchor="start" >R1</text><text x="179" y="928" font-size="19" fill="#000" font-weight="bold" text-anchor="start" >47k</text><text x="286.5" y="908" font-size="19" fill="#000" font-weight="bold" text-anchor="start" >C1</text><text x="333.5" y="907" font-size="19" fill="#000" font-weight="bold" text-anchor="start" >100µF</text><text x="275.25" y="960" font-size="19" fill="#000" font-weight="bold" text-anchor="start" >D5</text><text x="338.5" y="960" font-size="19" fill="#000" font-weight="bold" text-anchor="start" >1N759</text><text x="72.4" y="892" font-size="19" fill="#000" font-weight="bold" text-anchor="start" >Vin</text><text x="65.25" y="918" font-size="19" fill="#000" font-weight="bold" text-anchor="start" >AC 1</text><text x="560" y="749.6" font-size="19" fill="#000" font-weight="bold" text-anchor="start" >Out</text><text x="544.6" y="799.4" font-size="19" fill="#000" font-weight="bold" text-anchor="start" >Rload1</text><text x="544.6" y="823" font-size="19" fill="#000" font-weight="bold" text-anchor="start" >1500</text><text x="461.75" y="837" font-size="19" fill="#000" font-weight="bold" text-anchor="start" >Cout1</text><text x="461.75" y="856" font-size="19" fill="#000" font-weight="bold" text-anchor="start" >100µF</text><text x="633.7" y="750" font-size="19" fill="#000" font-weight="bold" text-anchor="start" >IN</text><text x="700" y="731.3" font-size="19" fill="#000" font-weight="bold" text-anchor="start" >L1</text><text x="693.4" y="769.6" font-size="19" fill="#000" font-weight="bold" text-anchor="start" >20H</text><text x="779.7" y="731" font-size="19" fill="#000" font-weight="bold" text-anchor="start" >R5</text><text x="781" y="767" font-size="19" fill="#000" font-weight="bold" text-anchor="start" >10</text><text x="916.5" y="749.6" font-size="19" fill="#000" font-weight="bold" text-anchor="start" >Out2</text><text x="761" y="864.5" font-size="19" fill="#000" font-weight="bold" text-anchor="start" >Cout2</text><text x="760.3" y="885" font-size="19" fill="#000" font-weight="bold" text-anchor="start" >100µF</text><text x="888.6" y="852" font-size="19" fill="#000" font-weight="bold" text-anchor="start" >Rload2</text><text x="888.6" y="875" font-size="19" fill="#000" font-weight="bold" text-anchor="start" >1500</text><text x="991.8" y="750" font-size="19" fill="#000" font-weight="bold" text-anchor="start" >IN</text><text x="1057.6" y="731" font-size="19" fill="#000" font-weight="bold" text-anchor="start" >R6</text><text x="1058.9" y="767" font-size="19" fill="#000" font-weight="bold" text-anchor="start" >10</text><text x="1196" y="749" font-size="19" fill="#000" font-weight="bold" text-anchor="start" >Out3</text><text x="1043.4" y="872.2" font-size="19" fill="#000" font-weight="bold" text-anchor="start" >Cout3</text><text x="1024" y="891.8" font-size="19" fill="#000" font-weight="bold" text-anchor="start" letter-spacing="0.4">10000µF</text><text x="1167.7" y="852.5" font-size="19" fill="#000" font-weight="bold" text-anchor="start" >Rload3</text><text x="1167.7" y="875" font-size="19" fill="#000" font-weight="bold" text-anchor="start" >1500</text><text x="598.5" y="961.25" font-size="19" fill="#000" font-weight="bold" text-anchor="start" word-spacing="1">.ac oct 100 1 100</text><text x="42.4" y="869" font-size="19" fill="#0000c8" font-weight="bold" text-anchor="start" word-spacing="1.3">AC 220V</text></svg>
</body></html>
